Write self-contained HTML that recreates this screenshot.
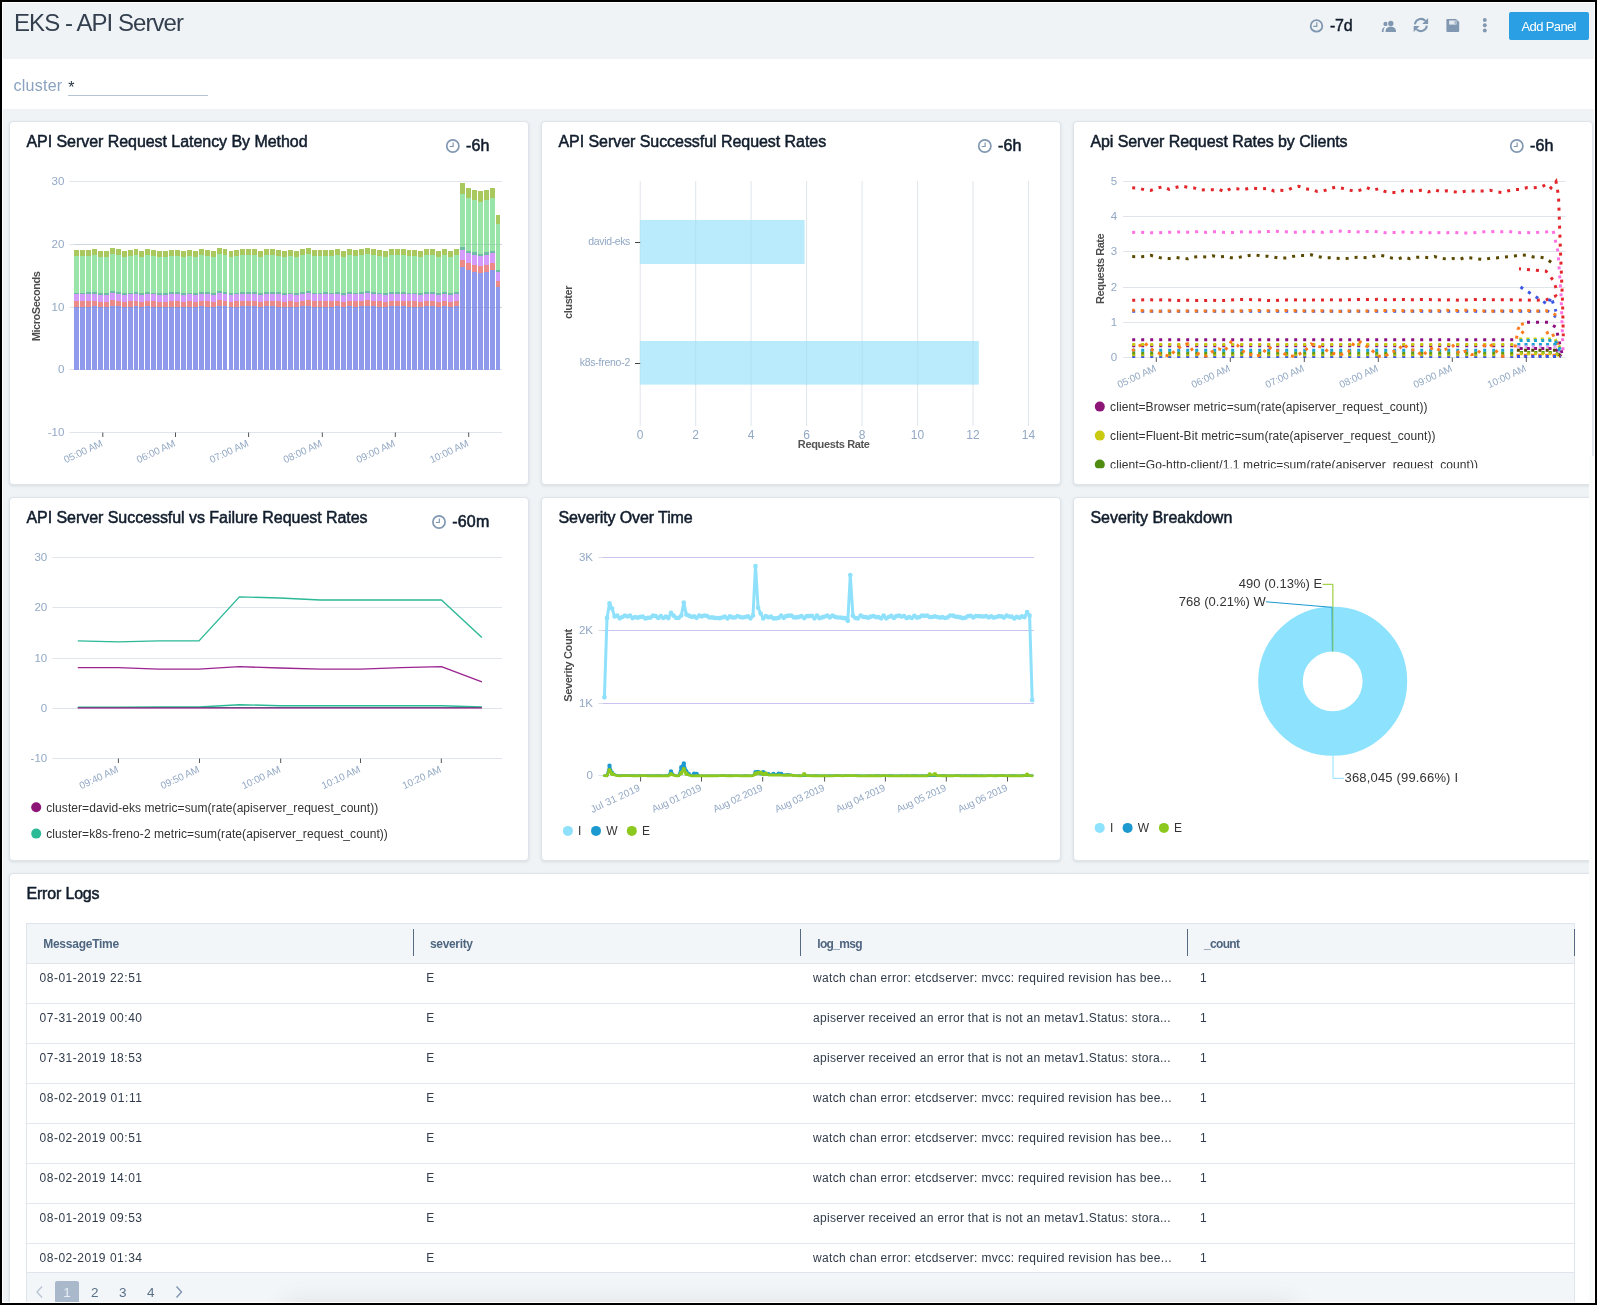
<!DOCTYPE html>
<html lang="en"><head><meta charset="utf-8"><title>EKS - API Server</title>
<style>
html,body{margin:0;padding:0;background:#000;}
body{width:1597px;height:1305px;overflow:hidden;position:relative;font-family:"Liberation Sans",sans-serif;}
#root{position:absolute;left:0;top:0;width:1597px;height:1305px;overflow:hidden;background:#000;will-change:transform;}
#pg{position:absolute;left:2px;top:2px;width:1593px;height:1301px;background:#f0f3f5;overflow:hidden;}
.abs{position:absolute;}
.t{position:absolute;white-space:nowrap;line-height:1;}
.panel{position:absolute;background:#fff;border:1px solid #dde4eb;border-radius:4px;box-sizing:border-box;box-shadow:0 1px 3px rgba(40,60,80,0.13);}
svg{position:absolute;left:0;top:0;overflow:visible;}
svg text{font-family:"Liberation Sans",sans-serif;}
</style></head>
<body>
<div id="root">
<div id="pg"></div>
<span class="t" style="left:14.00px;top:10.78px;font-size:24px;color:#333f4e;letter-spacing:-0.938px;">EKS - API Server</span>
<div class="abs" style="left:2px;top:59px;width:1592px;height:50px;background:#fff"></div>
<span class="t" style="left:13.50px;top:77.56px;font-size:16px;color:#8aa2bf;letter-spacing:0.246px;">cluster</span>
<span class="t" style="left:68.30px;top:79.86px;font-size:16px;color:#2a3645;">*</span>
<div class="abs" style="left:68px;top:95px;width:140px;height:1px;background:#b5c3d3"></div>
<svg width="1597" height="60"><g fill="none" stroke="#8097b1" stroke-width="1.8"><circle cx="1316.5" cy="25.9" r="5.8"/><path d="M1316.8 22.299999999999997V26.4H1313.3" stroke-width="1.2"/></g><g fill="#8097b1"><circle cx="1385.6" cy="23.9" r="2.2"/><path d="M1381.8 31.9c0-3 1.2-4.3 3.2-4.8c-0.9 1.1-1.4 2.7-1.4 4.8z"/><circle cx="1390.8" cy="23.5" r="3.5" fill="#f0f3f5"/><circle cx="1390.8" cy="23.5" r="2.65"/><path d="M1385.5 31.9c0-3.7 2.2-5.1 5.3-5.1s5.2 1.4 5.2 5.1z"/></g><g fill="none" stroke="#8097b1" stroke-width="2.1"><path d="M1415 24.4a6 6 0 0 1 10.4-3.5"/><path d="M1426.8 25.6a6 6 0 0 1 -10.4 3.5"/></g><g fill="#8097b1"><path d="M1428.1 18.1v5.9h-5.9z"/><path d="M1413.7 31.9v-5.9h5.9z"/></g><path fill="#8097b1" d="M1447.3 18.9h8.7l3.2 3.2v8.9a0.9 0.9 0 0 1 -0.9 0.9h-11a0.9 0.9 0 0 1 -0.9 -0.9v-11.2a0.9 0.9 0 0 1 0.9 -0.9z"/><rect x="1449.1" y="20.5" width="7.4" height="4.1" fill="#e3e9ef"/><rect x="1454.6" y="21" width="1.2" height="3.1" fill="#8097b1" fill-opacity="0.7"/><circle cx="1484.8" cy="20" r="1.95" fill="#8097b1"/><circle cx="1484.8" cy="25.3" r="1.95" fill="#8097b1"/><circle cx="1484.8" cy="30.5" r="1.95" fill="#8097b1"/></svg>
<span class="t" style="left:1330.00px;top:17.56px;font-size:16px;color:#111d2c;letter-spacing:-0.211px;-webkit-text-stroke:0.45px #111d2c;">-7d</span>
<div class="abs" style="left:1508.5px;top:12px;width:80px;height:28px;background:#2a9fe4;border-radius:2px"></div>
<span class="t" style="left:1521.50px;top:20.30px;font-size:13px;color:#fff;letter-spacing:-0.624px;">Add Panel</span>
<div class="panel" style="left:9px;top:121px;width:520px;height:364px"></div>
<span class="t" style="left:26.40px;top:134.36px;font-size:16px;color:#111d2c;letter-spacing:-0.046px;-webkit-text-stroke:0.5px #111d2c;">API Server Request Latency By Method</span>
<svg width="1597" height="1305"><g fill="none" stroke="#8097b1" stroke-width="1.7"><circle cx="452.8" cy="146" r="6.1"/><path d="M453.1 142.4V146.5H449.6" stroke-width="1.2"/></g></svg>
<span class="t" style="left:466.00px;top:138.16px;font-size:16px;color:#111d2c;letter-spacing:0.089px;-webkit-text-stroke:0.55px #111d2c;">-6h</span>
<div class="panel" style="left:541px;top:121px;width:520px;height:364px"></div>
<span class="t" style="left:558.40px;top:134.36px;font-size:16px;color:#111d2c;letter-spacing:-0.048px;-webkit-text-stroke:0.5px #111d2c;">API Server Successful Request Rates</span>
<svg width="1597" height="1305"><g fill="none" stroke="#8097b1" stroke-width="1.7"><circle cx="984.8" cy="146" r="6.1"/><path d="M985.0999999999999 142.4V146.5H981.5999999999999" stroke-width="1.2"/></g></svg>
<span class="t" style="left:998.00px;top:138.16px;font-size:16px;color:#111d2c;letter-spacing:0.089px;-webkit-text-stroke:0.55px #111d2c;">-6h</span>
<div class="panel" style="left:1073px;top:121px;width:520px;height:364px"></div>
<span class="t" style="left:1090.40px;top:134.36px;font-size:16px;color:#111d2c;letter-spacing:-0.072px;-webkit-text-stroke:0.5px #111d2c;">Api Server Request Rates by Clients</span>
<svg width="1597" height="1305"><g fill="none" stroke="#8097b1" stroke-width="1.7"><circle cx="1516.8" cy="146" r="6.1"/><path d="M1517.1 142.4V146.5H1513.6" stroke-width="1.2"/></g></svg>
<span class="t" style="left:1530.00px;top:138.16px;font-size:16px;color:#111d2c;letter-spacing:0.089px;-webkit-text-stroke:0.55px #111d2c;">-6h</span>
<div class="panel" style="left:9px;top:497px;width:520px;height:364px"></div>
<span class="t" style="left:26.40px;top:510.36px;font-size:16px;color:#111d2c;letter-spacing:-0.045px;-webkit-text-stroke:0.5px #111d2c;">API Server Successful vs Failure Request Rates</span>
<svg width="1597" height="1305"><g fill="none" stroke="#8097b1" stroke-width="1.7"><circle cx="439" cy="522" r="6.1"/><path d="M439.3 518.4V522.5H435.8" stroke-width="1.2"/></g></svg>
<span class="t" style="left:452.20px;top:514.16px;font-size:16px;color:#111d2c;letter-spacing:0.217px;-webkit-text-stroke:0.55px #111d2c;">-60m</span>
<div class="panel" style="left:541px;top:497px;width:520px;height:364px"></div>
<span class="t" style="left:558.40px;top:510.36px;font-size:16px;color:#111d2c;letter-spacing:-0.101px;-webkit-text-stroke:0.5px #111d2c;">Severity Over Time</span>
<div class="panel" style="left:1073px;top:497px;width:520px;height:364px"></div>
<span class="t" style="left:1090.40px;top:510.36px;font-size:16px;color:#111d2c;letter-spacing:-0.022px;-webkit-text-stroke:0.5px #111d2c;">Severity Breakdown</span>
<div class="panel" style="left:9px;top:873px;width:1584px;height:440px"></div>
<span class="t" style="left:26.40px;top:886.36px;font-size:16px;color:#111d2c;letter-spacing:-0.166px;-webkit-text-stroke:0.5px #111d2c;">Error Logs</span>
<svg width="1597" height="1305">
<path d="M69.5 181.5H502" stroke="#dfe5eb" stroke-width="1"/>
<text x="64.30" y="184.80" font-size="11.5" fill="#92a8c4" text-anchor="end">30</text>
<path d="M69.5 244.5H502" stroke="#dfe5eb" stroke-width="1"/>
<text x="64.30" y="247.80" font-size="11.5" fill="#92a8c4" text-anchor="end">20</text>
<path d="M69.5 307.5H502" stroke="#dfe5eb" stroke-width="1"/>
<text x="64.30" y="310.80" font-size="11.5" fill="#92a8c4" text-anchor="end">10</text>
<path d="M69.5 369.5H502" stroke="#dfe5eb" stroke-width="1"/>
<text x="64.30" y="372.80" font-size="11.5" fill="#92a8c4" text-anchor="end">0</text>
<path d="M69.5 432.5H502" stroke="#dfe5eb" stroke-width="1"/>
<text x="64.30" y="435.80" font-size="11.5" fill="#92a8c4" text-anchor="end">-10</text>
<g shape-rendering="crispEdges">
<rect x="74.20" y="307.00" width="4.9" height="62.75" fill="#8f9aec"/>
<rect x="74.20" y="301.35" width="4.9" height="5.65" fill="#ec8a8a"/>
<rect x="74.20" y="294.45" width="4.9" height="6.90" fill="#d39bfb"/>
<rect x="74.20" y="292.57" width="4.9" height="1.88" fill="#6fbba6"/>
<rect x="74.20" y="256.17" width="4.9" height="36.40" fill="#99e4a8"/>
<rect x="74.20" y="250.40" width="4.9" height="5.77" fill="#a9c95e"/>
<rect x="80.14" y="307.00" width="4.9" height="62.75" fill="#8f9aec"/>
<rect x="80.14" y="301.35" width="4.9" height="5.65" fill="#ec8a8a"/>
<rect x="80.14" y="294.45" width="4.9" height="6.90" fill="#d39bfb"/>
<rect x="80.14" y="292.57" width="4.9" height="1.88" fill="#6fbba6"/>
<rect x="80.14" y="256.17" width="4.9" height="36.40" fill="#99e4a8"/>
<rect x="80.14" y="250.40" width="4.9" height="5.77" fill="#a9c95e"/>
<rect x="86.07" y="306.81" width="4.9" height="62.94" fill="#8f9aec"/>
<rect x="86.07" y="301.16" width="4.9" height="5.65" fill="#ec8a8a"/>
<rect x="86.07" y="294.26" width="4.9" height="6.90" fill="#d39bfb"/>
<rect x="86.07" y="292.38" width="4.9" height="1.88" fill="#6fbba6"/>
<rect x="86.07" y="255.86" width="4.9" height="36.52" fill="#99e4a8"/>
<rect x="86.07" y="250.09" width="4.9" height="5.77" fill="#a9c95e"/>
<rect x="92.00" y="306.25" width="4.9" height="63.50" fill="#8f9aec"/>
<rect x="92.00" y="300.60" width="4.9" height="5.65" fill="#ec8a8a"/>
<rect x="92.00" y="293.70" width="4.9" height="6.90" fill="#d39bfb"/>
<rect x="92.00" y="291.81" width="4.9" height="1.88" fill="#6fbba6"/>
<rect x="92.00" y="254.92" width="4.9" height="36.90" fill="#99e4a8"/>
<rect x="92.00" y="249.14" width="4.9" height="5.77" fill="#a9c95e"/>
<rect x="97.94" y="307.38" width="4.9" height="62.37" fill="#8f9aec"/>
<rect x="97.94" y="301.73" width="4.9" height="5.65" fill="#ec8a8a"/>
<rect x="97.94" y="294.83" width="4.9" height="6.90" fill="#d39bfb"/>
<rect x="97.94" y="292.94" width="4.9" height="1.88" fill="#6fbba6"/>
<rect x="97.94" y="256.80" width="4.9" height="36.14" fill="#99e4a8"/>
<rect x="97.94" y="251.03" width="4.9" height="5.77" fill="#a9c95e"/>
<rect x="103.88" y="307.38" width="4.9" height="62.37" fill="#8f9aec"/>
<rect x="103.88" y="301.73" width="4.9" height="5.65" fill="#ec8a8a"/>
<rect x="103.88" y="294.83" width="4.9" height="6.90" fill="#d39bfb"/>
<rect x="103.88" y="292.94" width="4.9" height="1.88" fill="#6fbba6"/>
<rect x="103.88" y="256.80" width="4.9" height="36.14" fill="#99e4a8"/>
<rect x="103.88" y="251.03" width="4.9" height="5.77" fill="#a9c95e"/>
<rect x="109.81" y="305.68" width="4.9" height="64.07" fill="#8f9aec"/>
<rect x="109.81" y="300.03" width="4.9" height="5.65" fill="#ec8a8a"/>
<rect x="109.81" y="293.13" width="4.9" height="6.90" fill="#d39bfb"/>
<rect x="109.81" y="291.25" width="4.9" height="1.88" fill="#6fbba6"/>
<rect x="109.81" y="253.98" width="4.9" height="37.27" fill="#99e4a8"/>
<rect x="109.81" y="248.20" width="4.9" height="5.77" fill="#a9c95e"/>
<rect x="115.75" y="306.25" width="4.9" height="63.50" fill="#8f9aec"/>
<rect x="115.75" y="300.60" width="4.9" height="5.65" fill="#ec8a8a"/>
<rect x="115.75" y="293.70" width="4.9" height="6.90" fill="#d39bfb"/>
<rect x="115.75" y="291.81" width="4.9" height="1.88" fill="#6fbba6"/>
<rect x="115.75" y="254.92" width="4.9" height="36.90" fill="#99e4a8"/>
<rect x="115.75" y="249.14" width="4.9" height="5.77" fill="#a9c95e"/>
<rect x="121.68" y="307.38" width="4.9" height="62.37" fill="#8f9aec"/>
<rect x="121.68" y="301.73" width="4.9" height="5.65" fill="#ec8a8a"/>
<rect x="121.68" y="294.83" width="4.9" height="6.90" fill="#d39bfb"/>
<rect x="121.68" y="292.94" width="4.9" height="1.88" fill="#6fbba6"/>
<rect x="121.68" y="256.80" width="4.9" height="36.14" fill="#99e4a8"/>
<rect x="121.68" y="251.03" width="4.9" height="5.77" fill="#a9c95e"/>
<rect x="127.62" y="307.00" width="4.9" height="62.75" fill="#8f9aec"/>
<rect x="127.62" y="301.35" width="4.9" height="5.65" fill="#ec8a8a"/>
<rect x="127.62" y="294.45" width="4.9" height="6.90" fill="#d39bfb"/>
<rect x="127.62" y="292.57" width="4.9" height="1.88" fill="#6fbba6"/>
<rect x="127.62" y="256.17" width="4.9" height="36.40" fill="#99e4a8"/>
<rect x="127.62" y="250.40" width="4.9" height="5.77" fill="#a9c95e"/>
<rect x="133.55" y="306.25" width="4.9" height="63.50" fill="#8f9aec"/>
<rect x="133.55" y="300.60" width="4.9" height="5.65" fill="#ec8a8a"/>
<rect x="133.55" y="293.70" width="4.9" height="6.90" fill="#d39bfb"/>
<rect x="133.55" y="291.81" width="4.9" height="1.88" fill="#6fbba6"/>
<rect x="133.55" y="254.92" width="4.9" height="36.90" fill="#99e4a8"/>
<rect x="133.55" y="249.14" width="4.9" height="5.77" fill="#a9c95e"/>
<rect x="139.49" y="307.38" width="4.9" height="62.37" fill="#8f9aec"/>
<rect x="139.49" y="301.73" width="4.9" height="5.65" fill="#ec8a8a"/>
<rect x="139.49" y="294.83" width="4.9" height="6.90" fill="#d39bfb"/>
<rect x="139.49" y="292.94" width="4.9" height="1.88" fill="#6fbba6"/>
<rect x="139.49" y="256.80" width="4.9" height="36.14" fill="#99e4a8"/>
<rect x="139.49" y="251.03" width="4.9" height="5.77" fill="#a9c95e"/>
<rect x="145.42" y="306.25" width="4.9" height="63.50" fill="#8f9aec"/>
<rect x="145.42" y="300.60" width="4.9" height="5.65" fill="#ec8a8a"/>
<rect x="145.42" y="293.70" width="4.9" height="6.90" fill="#d39bfb"/>
<rect x="145.42" y="291.81" width="4.9" height="1.88" fill="#6fbba6"/>
<rect x="145.42" y="254.92" width="4.9" height="36.90" fill="#99e4a8"/>
<rect x="145.42" y="249.14" width="4.9" height="5.77" fill="#a9c95e"/>
<rect x="151.36" y="307.00" width="4.9" height="62.75" fill="#8f9aec"/>
<rect x="151.36" y="301.35" width="4.9" height="5.65" fill="#ec8a8a"/>
<rect x="151.36" y="294.45" width="4.9" height="6.90" fill="#d39bfb"/>
<rect x="151.36" y="292.57" width="4.9" height="1.88" fill="#6fbba6"/>
<rect x="151.36" y="256.17" width="4.9" height="36.40" fill="#99e4a8"/>
<rect x="151.36" y="250.40" width="4.9" height="5.77" fill="#a9c95e"/>
<rect x="157.29" y="307.38" width="4.9" height="62.37" fill="#8f9aec"/>
<rect x="157.29" y="301.73" width="4.9" height="5.65" fill="#ec8a8a"/>
<rect x="157.29" y="294.83" width="4.9" height="6.90" fill="#d39bfb"/>
<rect x="157.29" y="292.94" width="4.9" height="1.88" fill="#6fbba6"/>
<rect x="157.29" y="256.80" width="4.9" height="36.14" fill="#99e4a8"/>
<rect x="157.29" y="251.03" width="4.9" height="5.77" fill="#a9c95e"/>
<rect x="163.22" y="307.38" width="4.9" height="62.37" fill="#8f9aec"/>
<rect x="163.22" y="301.73" width="4.9" height="5.65" fill="#ec8a8a"/>
<rect x="163.22" y="294.83" width="4.9" height="6.90" fill="#d39bfb"/>
<rect x="163.22" y="292.94" width="4.9" height="1.88" fill="#6fbba6"/>
<rect x="163.22" y="256.80" width="4.9" height="36.14" fill="#99e4a8"/>
<rect x="163.22" y="251.03" width="4.9" height="5.77" fill="#a9c95e"/>
<rect x="169.16" y="306.81" width="4.9" height="62.94" fill="#8f9aec"/>
<rect x="169.16" y="301.16" width="4.9" height="5.65" fill="#ec8a8a"/>
<rect x="169.16" y="294.26" width="4.9" height="6.90" fill="#d39bfb"/>
<rect x="169.16" y="292.38" width="4.9" height="1.88" fill="#6fbba6"/>
<rect x="169.16" y="255.86" width="4.9" height="36.52" fill="#99e4a8"/>
<rect x="169.16" y="250.09" width="4.9" height="5.77" fill="#a9c95e"/>
<rect x="175.09" y="306.81" width="4.9" height="62.94" fill="#8f9aec"/>
<rect x="175.09" y="301.16" width="4.9" height="5.65" fill="#ec8a8a"/>
<rect x="175.09" y="294.26" width="4.9" height="6.90" fill="#d39bfb"/>
<rect x="175.09" y="292.38" width="4.9" height="1.88" fill="#6fbba6"/>
<rect x="175.09" y="255.86" width="4.9" height="36.52" fill="#99e4a8"/>
<rect x="175.09" y="250.09" width="4.9" height="5.77" fill="#a9c95e"/>
<rect x="181.03" y="307.38" width="4.9" height="62.37" fill="#8f9aec"/>
<rect x="181.03" y="301.73" width="4.9" height="5.65" fill="#ec8a8a"/>
<rect x="181.03" y="294.83" width="4.9" height="6.90" fill="#d39bfb"/>
<rect x="181.03" y="292.94" width="4.9" height="1.88" fill="#6fbba6"/>
<rect x="181.03" y="256.80" width="4.9" height="36.14" fill="#99e4a8"/>
<rect x="181.03" y="251.03" width="4.9" height="5.77" fill="#a9c95e"/>
<rect x="186.96" y="307.00" width="4.9" height="62.75" fill="#8f9aec"/>
<rect x="186.96" y="301.35" width="4.9" height="5.65" fill="#ec8a8a"/>
<rect x="186.96" y="294.45" width="4.9" height="6.90" fill="#d39bfb"/>
<rect x="186.96" y="292.57" width="4.9" height="1.88" fill="#6fbba6"/>
<rect x="186.96" y="256.17" width="4.9" height="36.40" fill="#99e4a8"/>
<rect x="186.96" y="250.40" width="4.9" height="5.77" fill="#a9c95e"/>
<rect x="192.90" y="307.38" width="4.9" height="62.37" fill="#8f9aec"/>
<rect x="192.90" y="301.73" width="4.9" height="5.65" fill="#ec8a8a"/>
<rect x="192.90" y="294.83" width="4.9" height="6.90" fill="#d39bfb"/>
<rect x="192.90" y="292.94" width="4.9" height="1.88" fill="#6fbba6"/>
<rect x="192.90" y="256.80" width="4.9" height="36.14" fill="#99e4a8"/>
<rect x="192.90" y="251.03" width="4.9" height="5.77" fill="#a9c95e"/>
<rect x="198.83" y="306.25" width="4.9" height="63.50" fill="#8f9aec"/>
<rect x="198.83" y="300.60" width="4.9" height="5.65" fill="#ec8a8a"/>
<rect x="198.83" y="293.70" width="4.9" height="6.90" fill="#d39bfb"/>
<rect x="198.83" y="291.81" width="4.9" height="1.88" fill="#6fbba6"/>
<rect x="198.83" y="254.92" width="4.9" height="36.90" fill="#99e4a8"/>
<rect x="198.83" y="249.14" width="4.9" height="5.77" fill="#a9c95e"/>
<rect x="204.77" y="306.81" width="4.9" height="62.94" fill="#8f9aec"/>
<rect x="204.77" y="301.16" width="4.9" height="5.65" fill="#ec8a8a"/>
<rect x="204.77" y="294.26" width="4.9" height="6.90" fill="#d39bfb"/>
<rect x="204.77" y="292.38" width="4.9" height="1.88" fill="#6fbba6"/>
<rect x="204.77" y="255.86" width="4.9" height="36.52" fill="#99e4a8"/>
<rect x="204.77" y="250.09" width="4.9" height="5.77" fill="#a9c95e"/>
<rect x="210.70" y="307.38" width="4.9" height="62.37" fill="#8f9aec"/>
<rect x="210.70" y="301.73" width="4.9" height="5.65" fill="#ec8a8a"/>
<rect x="210.70" y="294.83" width="4.9" height="6.90" fill="#d39bfb"/>
<rect x="210.70" y="292.94" width="4.9" height="1.88" fill="#6fbba6"/>
<rect x="210.70" y="256.80" width="4.9" height="36.14" fill="#99e4a8"/>
<rect x="210.70" y="251.03" width="4.9" height="5.77" fill="#a9c95e"/>
<rect x="216.64" y="305.68" width="4.9" height="64.07" fill="#8f9aec"/>
<rect x="216.64" y="300.03" width="4.9" height="5.65" fill="#ec8a8a"/>
<rect x="216.64" y="293.13" width="4.9" height="6.90" fill="#d39bfb"/>
<rect x="216.64" y="291.25" width="4.9" height="1.88" fill="#6fbba6"/>
<rect x="216.64" y="253.98" width="4.9" height="37.27" fill="#99e4a8"/>
<rect x="216.64" y="248.20" width="4.9" height="5.77" fill="#a9c95e"/>
<rect x="222.57" y="306.25" width="4.9" height="63.50" fill="#8f9aec"/>
<rect x="222.57" y="300.60" width="4.9" height="5.65" fill="#ec8a8a"/>
<rect x="222.57" y="293.70" width="4.9" height="6.90" fill="#d39bfb"/>
<rect x="222.57" y="291.81" width="4.9" height="1.88" fill="#6fbba6"/>
<rect x="222.57" y="254.92" width="4.9" height="36.90" fill="#99e4a8"/>
<rect x="222.57" y="249.14" width="4.9" height="5.77" fill="#a9c95e"/>
<rect x="228.51" y="307.38" width="4.9" height="62.37" fill="#8f9aec"/>
<rect x="228.51" y="301.73" width="4.9" height="5.65" fill="#ec8a8a"/>
<rect x="228.51" y="294.83" width="4.9" height="6.90" fill="#d39bfb"/>
<rect x="228.51" y="292.94" width="4.9" height="1.88" fill="#6fbba6"/>
<rect x="228.51" y="256.80" width="4.9" height="36.14" fill="#99e4a8"/>
<rect x="228.51" y="251.03" width="4.9" height="5.77" fill="#a9c95e"/>
<rect x="234.44" y="307.00" width="4.9" height="62.75" fill="#8f9aec"/>
<rect x="234.44" y="301.35" width="4.9" height="5.65" fill="#ec8a8a"/>
<rect x="234.44" y="294.45" width="4.9" height="6.90" fill="#d39bfb"/>
<rect x="234.44" y="292.57" width="4.9" height="1.88" fill="#6fbba6"/>
<rect x="234.44" y="256.17" width="4.9" height="36.40" fill="#99e4a8"/>
<rect x="234.44" y="250.40" width="4.9" height="5.77" fill="#a9c95e"/>
<rect x="240.38" y="306.25" width="4.9" height="63.50" fill="#8f9aec"/>
<rect x="240.38" y="300.60" width="4.9" height="5.65" fill="#ec8a8a"/>
<rect x="240.38" y="293.70" width="4.9" height="6.90" fill="#d39bfb"/>
<rect x="240.38" y="291.81" width="4.9" height="1.88" fill="#6fbba6"/>
<rect x="240.38" y="254.92" width="4.9" height="36.90" fill="#99e4a8"/>
<rect x="240.38" y="249.14" width="4.9" height="5.77" fill="#a9c95e"/>
<rect x="246.31" y="306.25" width="4.9" height="63.50" fill="#8f9aec"/>
<rect x="246.31" y="300.60" width="4.9" height="5.65" fill="#ec8a8a"/>
<rect x="246.31" y="293.70" width="4.9" height="6.90" fill="#d39bfb"/>
<rect x="246.31" y="291.81" width="4.9" height="1.88" fill="#6fbba6"/>
<rect x="246.31" y="254.92" width="4.9" height="36.90" fill="#99e4a8"/>
<rect x="246.31" y="249.14" width="4.9" height="5.77" fill="#a9c95e"/>
<rect x="252.25" y="306.25" width="4.9" height="63.50" fill="#8f9aec"/>
<rect x="252.25" y="300.60" width="4.9" height="5.65" fill="#ec8a8a"/>
<rect x="252.25" y="293.70" width="4.9" height="6.90" fill="#d39bfb"/>
<rect x="252.25" y="291.81" width="4.9" height="1.88" fill="#6fbba6"/>
<rect x="252.25" y="254.92" width="4.9" height="36.90" fill="#99e4a8"/>
<rect x="252.25" y="249.14" width="4.9" height="5.77" fill="#a9c95e"/>
<rect x="258.19" y="307.38" width="4.9" height="62.37" fill="#8f9aec"/>
<rect x="258.19" y="301.73" width="4.9" height="5.65" fill="#ec8a8a"/>
<rect x="258.19" y="294.83" width="4.9" height="6.90" fill="#d39bfb"/>
<rect x="258.19" y="292.94" width="4.9" height="1.88" fill="#6fbba6"/>
<rect x="258.19" y="256.80" width="4.9" height="36.14" fill="#99e4a8"/>
<rect x="258.19" y="251.03" width="4.9" height="5.77" fill="#a9c95e"/>
<rect x="264.12" y="306.25" width="4.9" height="63.50" fill="#8f9aec"/>
<rect x="264.12" y="300.60" width="4.9" height="5.65" fill="#ec8a8a"/>
<rect x="264.12" y="293.70" width="4.9" height="6.90" fill="#d39bfb"/>
<rect x="264.12" y="291.81" width="4.9" height="1.88" fill="#6fbba6"/>
<rect x="264.12" y="254.92" width="4.9" height="36.90" fill="#99e4a8"/>
<rect x="264.12" y="249.14" width="4.9" height="5.77" fill="#a9c95e"/>
<rect x="270.06" y="306.25" width="4.9" height="63.50" fill="#8f9aec"/>
<rect x="270.06" y="300.60" width="4.9" height="5.65" fill="#ec8a8a"/>
<rect x="270.06" y="293.70" width="4.9" height="6.90" fill="#d39bfb"/>
<rect x="270.06" y="291.81" width="4.9" height="1.88" fill="#6fbba6"/>
<rect x="270.06" y="254.92" width="4.9" height="36.90" fill="#99e4a8"/>
<rect x="270.06" y="249.14" width="4.9" height="5.77" fill="#a9c95e"/>
<rect x="275.99" y="306.81" width="4.9" height="62.94" fill="#8f9aec"/>
<rect x="275.99" y="301.16" width="4.9" height="5.65" fill="#ec8a8a"/>
<rect x="275.99" y="294.26" width="4.9" height="6.90" fill="#d39bfb"/>
<rect x="275.99" y="292.38" width="4.9" height="1.88" fill="#6fbba6"/>
<rect x="275.99" y="255.86" width="4.9" height="36.52" fill="#99e4a8"/>
<rect x="275.99" y="250.09" width="4.9" height="5.77" fill="#a9c95e"/>
<rect x="281.93" y="307.38" width="4.9" height="62.37" fill="#8f9aec"/>
<rect x="281.93" y="301.73" width="4.9" height="5.65" fill="#ec8a8a"/>
<rect x="281.93" y="294.83" width="4.9" height="6.90" fill="#d39bfb"/>
<rect x="281.93" y="292.94" width="4.9" height="1.88" fill="#6fbba6"/>
<rect x="281.93" y="256.80" width="4.9" height="36.14" fill="#99e4a8"/>
<rect x="281.93" y="251.03" width="4.9" height="5.77" fill="#a9c95e"/>
<rect x="287.86" y="307.00" width="4.9" height="62.75" fill="#8f9aec"/>
<rect x="287.86" y="301.35" width="4.9" height="5.65" fill="#ec8a8a"/>
<rect x="287.86" y="294.45" width="4.9" height="6.90" fill="#d39bfb"/>
<rect x="287.86" y="292.57" width="4.9" height="1.88" fill="#6fbba6"/>
<rect x="287.86" y="256.17" width="4.9" height="36.40" fill="#99e4a8"/>
<rect x="287.86" y="250.40" width="4.9" height="5.77" fill="#a9c95e"/>
<rect x="293.80" y="307.38" width="4.9" height="62.37" fill="#8f9aec"/>
<rect x="293.80" y="301.73" width="4.9" height="5.65" fill="#ec8a8a"/>
<rect x="293.80" y="294.83" width="4.9" height="6.90" fill="#d39bfb"/>
<rect x="293.80" y="292.94" width="4.9" height="1.88" fill="#6fbba6"/>
<rect x="293.80" y="256.80" width="4.9" height="36.14" fill="#99e4a8"/>
<rect x="293.80" y="251.03" width="4.9" height="5.77" fill="#a9c95e"/>
<rect x="299.73" y="306.25" width="4.9" height="63.50" fill="#8f9aec"/>
<rect x="299.73" y="300.60" width="4.9" height="5.65" fill="#ec8a8a"/>
<rect x="299.73" y="293.70" width="4.9" height="6.90" fill="#d39bfb"/>
<rect x="299.73" y="291.81" width="4.9" height="1.88" fill="#6fbba6"/>
<rect x="299.73" y="254.92" width="4.9" height="36.90" fill="#99e4a8"/>
<rect x="299.73" y="249.14" width="4.9" height="5.77" fill="#a9c95e"/>
<rect x="305.66" y="305.68" width="4.9" height="64.07" fill="#8f9aec"/>
<rect x="305.66" y="300.03" width="4.9" height="5.65" fill="#ec8a8a"/>
<rect x="305.66" y="293.13" width="4.9" height="6.90" fill="#d39bfb"/>
<rect x="305.66" y="291.25" width="4.9" height="1.88" fill="#6fbba6"/>
<rect x="305.66" y="253.98" width="4.9" height="37.27" fill="#99e4a8"/>
<rect x="305.66" y="248.20" width="4.9" height="5.77" fill="#a9c95e"/>
<rect x="311.60" y="307.00" width="4.9" height="62.75" fill="#8f9aec"/>
<rect x="311.60" y="301.35" width="4.9" height="5.65" fill="#ec8a8a"/>
<rect x="311.60" y="294.45" width="4.9" height="6.90" fill="#d39bfb"/>
<rect x="311.60" y="292.57" width="4.9" height="1.88" fill="#6fbba6"/>
<rect x="311.60" y="256.17" width="4.9" height="36.40" fill="#99e4a8"/>
<rect x="311.60" y="250.40" width="4.9" height="5.77" fill="#a9c95e"/>
<rect x="317.53" y="307.00" width="4.9" height="62.75" fill="#8f9aec"/>
<rect x="317.53" y="301.35" width="4.9" height="5.65" fill="#ec8a8a"/>
<rect x="317.53" y="294.45" width="4.9" height="6.90" fill="#d39bfb"/>
<rect x="317.53" y="292.57" width="4.9" height="1.88" fill="#6fbba6"/>
<rect x="317.53" y="256.17" width="4.9" height="36.40" fill="#99e4a8"/>
<rect x="317.53" y="250.40" width="4.9" height="5.77" fill="#a9c95e"/>
<rect x="323.47" y="306.81" width="4.9" height="62.94" fill="#8f9aec"/>
<rect x="323.47" y="301.16" width="4.9" height="5.65" fill="#ec8a8a"/>
<rect x="323.47" y="294.26" width="4.9" height="6.90" fill="#d39bfb"/>
<rect x="323.47" y="292.38" width="4.9" height="1.88" fill="#6fbba6"/>
<rect x="323.47" y="255.86" width="4.9" height="36.52" fill="#99e4a8"/>
<rect x="323.47" y="250.09" width="4.9" height="5.77" fill="#a9c95e"/>
<rect x="329.40" y="307.00" width="4.9" height="62.75" fill="#8f9aec"/>
<rect x="329.40" y="301.35" width="4.9" height="5.65" fill="#ec8a8a"/>
<rect x="329.40" y="294.45" width="4.9" height="6.90" fill="#d39bfb"/>
<rect x="329.40" y="292.57" width="4.9" height="1.88" fill="#6fbba6"/>
<rect x="329.40" y="256.17" width="4.9" height="36.40" fill="#99e4a8"/>
<rect x="329.40" y="250.40" width="4.9" height="5.77" fill="#a9c95e"/>
<rect x="335.34" y="306.25" width="4.9" height="63.50" fill="#8f9aec"/>
<rect x="335.34" y="300.60" width="4.9" height="5.65" fill="#ec8a8a"/>
<rect x="335.34" y="293.70" width="4.9" height="6.90" fill="#d39bfb"/>
<rect x="335.34" y="291.81" width="4.9" height="1.88" fill="#6fbba6"/>
<rect x="335.34" y="254.92" width="4.9" height="36.90" fill="#99e4a8"/>
<rect x="335.34" y="249.14" width="4.9" height="5.77" fill="#a9c95e"/>
<rect x="341.27" y="307.38" width="4.9" height="62.37" fill="#8f9aec"/>
<rect x="341.27" y="301.73" width="4.9" height="5.65" fill="#ec8a8a"/>
<rect x="341.27" y="294.83" width="4.9" height="6.90" fill="#d39bfb"/>
<rect x="341.27" y="292.94" width="4.9" height="1.88" fill="#6fbba6"/>
<rect x="341.27" y="256.80" width="4.9" height="36.14" fill="#99e4a8"/>
<rect x="341.27" y="251.03" width="4.9" height="5.77" fill="#a9c95e"/>
<rect x="347.21" y="306.25" width="4.9" height="63.50" fill="#8f9aec"/>
<rect x="347.21" y="300.60" width="4.9" height="5.65" fill="#ec8a8a"/>
<rect x="347.21" y="293.70" width="4.9" height="6.90" fill="#d39bfb"/>
<rect x="347.21" y="291.81" width="4.9" height="1.88" fill="#6fbba6"/>
<rect x="347.21" y="254.92" width="4.9" height="36.90" fill="#99e4a8"/>
<rect x="347.21" y="249.14" width="4.9" height="5.77" fill="#a9c95e"/>
<rect x="353.14" y="307.00" width="4.9" height="62.75" fill="#8f9aec"/>
<rect x="353.14" y="301.35" width="4.9" height="5.65" fill="#ec8a8a"/>
<rect x="353.14" y="294.45" width="4.9" height="6.90" fill="#d39bfb"/>
<rect x="353.14" y="292.57" width="4.9" height="1.88" fill="#6fbba6"/>
<rect x="353.14" y="256.17" width="4.9" height="36.40" fill="#99e4a8"/>
<rect x="353.14" y="250.40" width="4.9" height="5.77" fill="#a9c95e"/>
<rect x="359.08" y="306.25" width="4.9" height="63.50" fill="#8f9aec"/>
<rect x="359.08" y="300.60" width="4.9" height="5.65" fill="#ec8a8a"/>
<rect x="359.08" y="293.70" width="4.9" height="6.90" fill="#d39bfb"/>
<rect x="359.08" y="291.81" width="4.9" height="1.88" fill="#6fbba6"/>
<rect x="359.08" y="254.92" width="4.9" height="36.90" fill="#99e4a8"/>
<rect x="359.08" y="249.14" width="4.9" height="5.77" fill="#a9c95e"/>
<rect x="365.01" y="305.68" width="4.9" height="64.07" fill="#8f9aec"/>
<rect x="365.01" y="300.03" width="4.9" height="5.65" fill="#ec8a8a"/>
<rect x="365.01" y="293.13" width="4.9" height="6.90" fill="#d39bfb"/>
<rect x="365.01" y="291.25" width="4.9" height="1.88" fill="#6fbba6"/>
<rect x="365.01" y="253.98" width="4.9" height="37.27" fill="#99e4a8"/>
<rect x="365.01" y="248.20" width="4.9" height="5.77" fill="#a9c95e"/>
<rect x="370.95" y="306.25" width="4.9" height="63.50" fill="#8f9aec"/>
<rect x="370.95" y="300.60" width="4.9" height="5.65" fill="#ec8a8a"/>
<rect x="370.95" y="293.70" width="4.9" height="6.90" fill="#d39bfb"/>
<rect x="370.95" y="291.81" width="4.9" height="1.88" fill="#6fbba6"/>
<rect x="370.95" y="254.92" width="4.9" height="36.90" fill="#99e4a8"/>
<rect x="370.95" y="249.14" width="4.9" height="5.77" fill="#a9c95e"/>
<rect x="376.88" y="307.00" width="4.9" height="62.75" fill="#8f9aec"/>
<rect x="376.88" y="301.35" width="4.9" height="5.65" fill="#ec8a8a"/>
<rect x="376.88" y="294.45" width="4.9" height="6.90" fill="#d39bfb"/>
<rect x="376.88" y="292.57" width="4.9" height="1.88" fill="#6fbba6"/>
<rect x="376.88" y="256.17" width="4.9" height="36.40" fill="#99e4a8"/>
<rect x="376.88" y="250.40" width="4.9" height="5.77" fill="#a9c95e"/>
<rect x="382.82" y="307.38" width="4.9" height="62.37" fill="#8f9aec"/>
<rect x="382.82" y="301.73" width="4.9" height="5.65" fill="#ec8a8a"/>
<rect x="382.82" y="294.83" width="4.9" height="6.90" fill="#d39bfb"/>
<rect x="382.82" y="292.94" width="4.9" height="1.88" fill="#6fbba6"/>
<rect x="382.82" y="256.80" width="4.9" height="36.14" fill="#99e4a8"/>
<rect x="382.82" y="251.03" width="4.9" height="5.77" fill="#a9c95e"/>
<rect x="388.75" y="306.25" width="4.9" height="63.50" fill="#8f9aec"/>
<rect x="388.75" y="300.60" width="4.9" height="5.65" fill="#ec8a8a"/>
<rect x="388.75" y="293.70" width="4.9" height="6.90" fill="#d39bfb"/>
<rect x="388.75" y="291.81" width="4.9" height="1.88" fill="#6fbba6"/>
<rect x="388.75" y="254.92" width="4.9" height="36.90" fill="#99e4a8"/>
<rect x="388.75" y="249.14" width="4.9" height="5.77" fill="#a9c95e"/>
<rect x="394.69" y="306.25" width="4.9" height="63.50" fill="#8f9aec"/>
<rect x="394.69" y="300.60" width="4.9" height="5.65" fill="#ec8a8a"/>
<rect x="394.69" y="293.70" width="4.9" height="6.90" fill="#d39bfb"/>
<rect x="394.69" y="291.81" width="4.9" height="1.88" fill="#6fbba6"/>
<rect x="394.69" y="254.92" width="4.9" height="36.90" fill="#99e4a8"/>
<rect x="394.69" y="249.14" width="4.9" height="5.77" fill="#a9c95e"/>
<rect x="400.62" y="306.25" width="4.9" height="63.50" fill="#8f9aec"/>
<rect x="400.62" y="300.60" width="4.9" height="5.65" fill="#ec8a8a"/>
<rect x="400.62" y="293.70" width="4.9" height="6.90" fill="#d39bfb"/>
<rect x="400.62" y="291.81" width="4.9" height="1.88" fill="#6fbba6"/>
<rect x="400.62" y="254.92" width="4.9" height="36.90" fill="#99e4a8"/>
<rect x="400.62" y="249.14" width="4.9" height="5.77" fill="#a9c95e"/>
<rect x="406.56" y="307.00" width="4.9" height="62.75" fill="#8f9aec"/>
<rect x="406.56" y="301.35" width="4.9" height="5.65" fill="#ec8a8a"/>
<rect x="406.56" y="294.45" width="4.9" height="6.90" fill="#d39bfb"/>
<rect x="406.56" y="292.57" width="4.9" height="1.88" fill="#6fbba6"/>
<rect x="406.56" y="256.17" width="4.9" height="36.40" fill="#99e4a8"/>
<rect x="406.56" y="250.40" width="4.9" height="5.77" fill="#a9c95e"/>
<rect x="412.49" y="307.00" width="4.9" height="62.75" fill="#8f9aec"/>
<rect x="412.49" y="301.35" width="4.9" height="5.65" fill="#ec8a8a"/>
<rect x="412.49" y="294.45" width="4.9" height="6.90" fill="#d39bfb"/>
<rect x="412.49" y="292.57" width="4.9" height="1.88" fill="#6fbba6"/>
<rect x="412.49" y="256.17" width="4.9" height="36.40" fill="#99e4a8"/>
<rect x="412.49" y="250.40" width="4.9" height="5.77" fill="#a9c95e"/>
<rect x="418.43" y="307.38" width="4.9" height="62.37" fill="#8f9aec"/>
<rect x="418.43" y="301.73" width="4.9" height="5.65" fill="#ec8a8a"/>
<rect x="418.43" y="294.83" width="4.9" height="6.90" fill="#d39bfb"/>
<rect x="418.43" y="292.94" width="4.9" height="1.88" fill="#6fbba6"/>
<rect x="418.43" y="256.80" width="4.9" height="36.14" fill="#99e4a8"/>
<rect x="418.43" y="251.03" width="4.9" height="5.77" fill="#a9c95e"/>
<rect x="424.36" y="306.25" width="4.9" height="63.50" fill="#8f9aec"/>
<rect x="424.36" y="300.60" width="4.9" height="5.65" fill="#ec8a8a"/>
<rect x="424.36" y="293.70" width="4.9" height="6.90" fill="#d39bfb"/>
<rect x="424.36" y="291.81" width="4.9" height="1.88" fill="#6fbba6"/>
<rect x="424.36" y="254.92" width="4.9" height="36.90" fill="#99e4a8"/>
<rect x="424.36" y="249.14" width="4.9" height="5.77" fill="#a9c95e"/>
<rect x="430.30" y="306.25" width="4.9" height="63.50" fill="#8f9aec"/>
<rect x="430.30" y="300.60" width="4.9" height="5.65" fill="#ec8a8a"/>
<rect x="430.30" y="293.70" width="4.9" height="6.90" fill="#d39bfb"/>
<rect x="430.30" y="291.81" width="4.9" height="1.88" fill="#6fbba6"/>
<rect x="430.30" y="254.92" width="4.9" height="36.90" fill="#99e4a8"/>
<rect x="430.30" y="249.14" width="4.9" height="5.77" fill="#a9c95e"/>
<rect x="436.23" y="307.38" width="4.9" height="62.37" fill="#8f9aec"/>
<rect x="436.23" y="301.73" width="4.9" height="5.65" fill="#ec8a8a"/>
<rect x="436.23" y="294.83" width="4.9" height="6.90" fill="#d39bfb"/>
<rect x="436.23" y="292.94" width="4.9" height="1.88" fill="#6fbba6"/>
<rect x="436.23" y="256.80" width="4.9" height="36.14" fill="#99e4a8"/>
<rect x="436.23" y="251.03" width="4.9" height="5.77" fill="#a9c95e"/>
<rect x="442.17" y="306.25" width="4.9" height="63.50" fill="#8f9aec"/>
<rect x="442.17" y="300.60" width="4.9" height="5.65" fill="#ec8a8a"/>
<rect x="442.17" y="293.70" width="4.9" height="6.90" fill="#d39bfb"/>
<rect x="442.17" y="291.81" width="4.9" height="1.88" fill="#6fbba6"/>
<rect x="442.17" y="254.92" width="4.9" height="36.90" fill="#99e4a8"/>
<rect x="442.17" y="249.14" width="4.9" height="5.77" fill="#a9c95e"/>
<rect x="448.10" y="307.38" width="4.9" height="62.37" fill="#8f9aec"/>
<rect x="448.10" y="301.73" width="4.9" height="5.65" fill="#ec8a8a"/>
<rect x="448.10" y="294.83" width="4.9" height="6.90" fill="#d39bfb"/>
<rect x="448.10" y="292.94" width="4.9" height="1.88" fill="#6fbba6"/>
<rect x="448.10" y="256.80" width="4.9" height="36.14" fill="#99e4a8"/>
<rect x="448.10" y="251.03" width="4.9" height="5.77" fill="#a9c95e"/>
<rect x="454.04" y="306.25" width="4.9" height="63.50" fill="#8f9aec"/>
<rect x="454.04" y="300.60" width="4.9" height="5.65" fill="#ec8a8a"/>
<rect x="454.04" y="293.70" width="4.9" height="6.90" fill="#d39bfb"/>
<rect x="454.04" y="291.81" width="4.9" height="1.88" fill="#6fbba6"/>
<rect x="454.04" y="254.92" width="4.9" height="36.90" fill="#99e4a8"/>
<rect x="454.04" y="249.14" width="4.9" height="5.77" fill="#a9c95e"/>
<rect x="459.97" y="267.47" width="4.9" height="102.28" fill="#8f9aec"/>
<rect x="459.97" y="259.94" width="4.9" height="7.53" fill="#ec8a8a"/>
<rect x="459.97" y="249.90" width="4.9" height="10.04" fill="#d39bfb"/>
<rect x="459.97" y="247.07" width="4.9" height="2.82" fill="#6fbba6"/>
<rect x="459.97" y="194.36" width="4.9" height="52.71" fill="#99e4a8"/>
<rect x="459.97" y="183.38" width="4.9" height="10.98" fill="#a9c95e"/>
<rect x="465.91" y="270.29" width="4.9" height="99.46" fill="#8f9aec"/>
<rect x="465.91" y="262.76" width="4.9" height="7.53" fill="#ec8a8a"/>
<rect x="465.91" y="253.35" width="4.9" height="9.41" fill="#d39bfb"/>
<rect x="465.91" y="250.52" width="4.9" height="2.82" fill="#6fbba6"/>
<rect x="465.91" y="198.44" width="4.9" height="52.08" fill="#99e4a8"/>
<rect x="465.91" y="188.40" width="4.9" height="10.04" fill="#a9c95e"/>
<rect x="471.84" y="272.11" width="4.9" height="97.64" fill="#8f9aec"/>
<rect x="471.84" y="264.58" width="4.9" height="7.53" fill="#ec8a8a"/>
<rect x="471.84" y="255.17" width="4.9" height="9.41" fill="#d39bfb"/>
<rect x="471.84" y="252.34" width="4.9" height="2.82" fill="#6fbba6"/>
<rect x="471.84" y="200.26" width="4.9" height="52.08" fill="#99e4a8"/>
<rect x="471.84" y="190.22" width="4.9" height="10.04" fill="#a9c95e"/>
<rect x="477.78" y="273.37" width="4.9" height="96.38" fill="#8f9aec"/>
<rect x="477.78" y="265.84" width="4.9" height="7.53" fill="#ec8a8a"/>
<rect x="477.78" y="256.42" width="4.9" height="9.41" fill="#d39bfb"/>
<rect x="477.78" y="253.60" width="4.9" height="2.82" fill="#6fbba6"/>
<rect x="477.78" y="201.52" width="4.9" height="52.08" fill="#99e4a8"/>
<rect x="477.78" y="191.48" width="4.9" height="10.04" fill="#a9c95e"/>
<rect x="483.71" y="272.11" width="4.9" height="97.64" fill="#8f9aec"/>
<rect x="483.71" y="264.58" width="4.9" height="7.53" fill="#ec8a8a"/>
<rect x="483.71" y="255.17" width="4.9" height="9.41" fill="#d39bfb"/>
<rect x="483.71" y="252.34" width="4.9" height="2.82" fill="#6fbba6"/>
<rect x="483.71" y="200.26" width="4.9" height="52.08" fill="#99e4a8"/>
<rect x="483.71" y="190.22" width="4.9" height="10.04" fill="#a9c95e"/>
<rect x="489.65" y="270.29" width="4.9" height="99.46" fill="#8f9aec"/>
<rect x="489.65" y="262.76" width="4.9" height="7.53" fill="#ec8a8a"/>
<rect x="489.65" y="253.35" width="4.9" height="9.41" fill="#d39bfb"/>
<rect x="489.65" y="250.52" width="4.9" height="2.82" fill="#6fbba6"/>
<rect x="489.65" y="197.81" width="4.9" height="52.71" fill="#99e4a8"/>
<rect x="489.65" y="188.09" width="4.9" height="9.73" fill="#a9c95e"/>
<rect x="495.58" y="286.92" width="4.9" height="82.83" fill="#8f9aec"/>
<rect x="495.58" y="280.64" width="4.9" height="6.28" fill="#ec8a8a"/>
<rect x="495.58" y="271.86" width="4.9" height="8.79" fill="#d39bfb"/>
<rect x="495.58" y="269.98" width="4.9" height="1.88" fill="#6fbba6"/>
<rect x="495.58" y="224.17" width="4.9" height="45.81" fill="#99e4a8"/>
<rect x="495.58" y="214.76" width="4.9" height="9.41" fill="#a9c95e"/>
</g>
<path d="M74 244.5H502" stroke="#5a6a8a" stroke-opacity="0.12" stroke-width="1"/>
<path d="M74 307.5H502" stroke="#5a6a8a" stroke-opacity="0.12" stroke-width="1"/>
<path d="M102.8 432.5v4.5" stroke="#555" stroke-width="1"/>
<text x="103.3" y="445.7" font-size="10" fill="#92a8c4" text-anchor="end" letter-spacing="-0.107" transform="rotate(-25 103.3 445.7)">05:00 AM</text>
<path d="M175.5 432.5v4.5" stroke="#555" stroke-width="1"/>
<text x="176.0" y="445.7" font-size="10" fill="#92a8c4" text-anchor="end" letter-spacing="-0.107" transform="rotate(-25 176.0 445.7)">06:00 AM</text>
<path d="M248.6 432.5v4.5" stroke="#555" stroke-width="1"/>
<text x="249.1" y="445.7" font-size="10" fill="#92a8c4" text-anchor="end" letter-spacing="-0.107" transform="rotate(-25 249.1 445.7)">07:00 AM</text>
<path d="M322.3 432.5v4.5" stroke="#555" stroke-width="1"/>
<text x="322.8" y="445.7" font-size="10" fill="#92a8c4" text-anchor="end" letter-spacing="-0.107" transform="rotate(-25 322.8 445.7)">08:00 AM</text>
<path d="M395.3 432.5v4.5" stroke="#555" stroke-width="1"/>
<text x="395.8" y="445.7" font-size="10" fill="#92a8c4" text-anchor="end" letter-spacing="-0.107" transform="rotate(-25 395.8 445.7)">09:00 AM</text>
<path d="M468.7 432.5v4.5" stroke="#555" stroke-width="1"/>
<text x="469.2" y="445.7" font-size="10" fill="#92a8c4" text-anchor="end" letter-spacing="-0.107" transform="rotate(-25 469.2 445.7)">10:00 AM</text>
<text x="40.30" y="306.40" font-size="11" fill="#4c4c4c" font-weight="700" text-anchor="middle" letter-spacing="-0.471" transform="rotate(-90 40.30 306.40)">MicroSeconds</text>
</svg>
<svg width="1597" height="1305">
<path d="M640.2 181V426" stroke="#dfe5eb" stroke-width="1"/>
<text x="640.20" y="438.60" font-size="12" fill="#92a8c4" text-anchor="middle">0</text>
<path d="M695.7 181V426" stroke="#dfe5eb" stroke-width="1"/>
<text x="695.67" y="438.60" font-size="12" fill="#92a8c4" text-anchor="middle">2</text>
<path d="M751.1 181V426" stroke="#dfe5eb" stroke-width="1"/>
<text x="751.14" y="438.60" font-size="12" fill="#92a8c4" text-anchor="middle">4</text>
<path d="M806.6 181V426" stroke="#dfe5eb" stroke-width="1"/>
<text x="806.61" y="438.60" font-size="12" fill="#92a8c4" text-anchor="middle">6</text>
<path d="M862.1 181V426" stroke="#dfe5eb" stroke-width="1"/>
<text x="862.08" y="438.60" font-size="12" fill="#92a8c4" text-anchor="middle">8</text>
<path d="M917.6 181V426" stroke="#dfe5eb" stroke-width="1"/>
<text x="917.55" y="438.60" font-size="12" fill="#92a8c4" text-anchor="middle">10</text>
<path d="M973.0 181V426" stroke="#dfe5eb" stroke-width="1"/>
<text x="973.02" y="438.60" font-size="12" fill="#92a8c4" text-anchor="middle">12</text>
<path d="M1028.5 181V426" stroke="#dfe5eb" stroke-width="1"/>
<text x="1028.49" y="438.60" font-size="12" fill="#92a8c4" text-anchor="middle">14</text>
<rect x="640.2" y="220" width="164.4" height="44" fill="#b9ebfc"/>
<rect x="640.2" y="341" width="338.6" height="43.6" fill="#b9ebfc"/>
<path d="M640.2 220V264" stroke="#7fb5cc" stroke-opacity="0.16" stroke-width="1"/>
<path d="M695.7 220V264" stroke="#7fb5cc" stroke-opacity="0.16" stroke-width="1"/>
<path d="M751.1 220V264" stroke="#7fb5cc" stroke-opacity="0.16" stroke-width="1"/>
<path d="M640.2 341V384.6" stroke="#7fb5cc" stroke-opacity="0.16" stroke-width="1"/>
<path d="M695.7 341V384.6" stroke="#7fb5cc" stroke-opacity="0.16" stroke-width="1"/>
<path d="M751.1 341V384.6" stroke="#7fb5cc" stroke-opacity="0.16" stroke-width="1"/>
<path d="M806.6 341V384.6" stroke="#7fb5cc" stroke-opacity="0.16" stroke-width="1"/>
<path d="M862.1 341V384.6" stroke="#7fb5cc" stroke-opacity="0.16" stroke-width="1"/>
<path d="M917.6 341V384.6" stroke="#7fb5cc" stroke-opacity="0.16" stroke-width="1"/>
<path d="M973.0 341V384.6" stroke="#7fb5cc" stroke-opacity="0.16" stroke-width="1"/>
<text x="630.00" y="244.90" font-size="10.5" fill="#92a8c4" text-anchor="end" letter-spacing="-0.367">david-eks</text>
<text x="630.00" y="365.90" font-size="10.5" fill="#92a8c4" text-anchor="end" letter-spacing="-0.260">k8s-freno-2</text>
<path d="M635 242.5h5.2M635 363.5h5.2" stroke="#444" stroke-width="1"/>
<text x="833.70" y="448.30" font-size="11" fill="#555" font-weight="700" text-anchor="middle" letter-spacing="-0.367">Requests Rate</text>
<text x="572.30" y="302.40" font-size="11" fill="#4c4c4c" font-weight="700" text-anchor="middle" letter-spacing="-0.428" transform="rotate(-90 572.30 302.40)">cluster</text>
</svg>
<svg width="1597" height="1305">
<path d="M1123 357.5H1565.5" stroke="#dfe5eb" stroke-width="1"/>
<text x="1117.20" y="360.80" font-size="11.5" fill="#92a8c4" text-anchor="end">0</text>
<path d="M1123 322.5H1565.5" stroke="#dfe5eb" stroke-width="1"/>
<text x="1117.20" y="325.80" font-size="11.5" fill="#92a8c4" text-anchor="end">1</text>
<path d="M1123 287.5H1565.5" stroke="#dfe5eb" stroke-width="1"/>
<text x="1117.20" y="290.80" font-size="11.5" fill="#92a8c4" text-anchor="end">2</text>
<path d="M1123 251.5H1565.5" stroke="#dfe5eb" stroke-width="1"/>
<text x="1117.20" y="254.80" font-size="11.5" fill="#92a8c4" text-anchor="end">3</text>
<path d="M1123 216.5H1565.5" stroke="#dfe5eb" stroke-width="1"/>
<text x="1117.20" y="219.80" font-size="11.5" fill="#92a8c4" text-anchor="end">4</text>
<path d="M1123 181.5H1565.5" stroke="#dfe5eb" stroke-width="1"/>
<text x="1117.20" y="184.80" font-size="11.5" fill="#92a8c4" text-anchor="end">5</text>
<polyline points="1132.2,356.6 1517.0,356.6" fill="none" stroke="#3b57e2" stroke-width="3" stroke-dasharray="3 6" stroke-dashoffset="0"/>
<polyline points="1132.2,354.8 1517.0,354.8" fill="none" stroke="#c9c912" stroke-width="3" stroke-dasharray="3 6" stroke-dashoffset="0"/>
<polyline points="1132.2,353.1 1517.0,353.1" fill="none" stroke="#5b9b12" stroke-width="3" stroke-dasharray="3 6" stroke-dashoffset="0"/>
<polyline points="1132.2,350.3 1517.0,350.3" fill="none" stroke="#19a3d3" stroke-width="3" stroke-dasharray="3 6" stroke-dashoffset="0"/>
<polyline points="1132.2,345.7 1517.0,345.7" fill="none" stroke="#8c1080" stroke-width="3" stroke-dasharray="3 6" stroke-dashoffset="0"/>
<polyline points="1132.2,344.6 1517.0,344.6" fill="none" stroke="#c9c912" stroke-width="3" stroke-dasharray="3 6" stroke-dashoffset="0"/>
<polyline points="1132.2,339.7 1517.0,339.7" fill="none" stroke="#8c1080" stroke-width="3" stroke-dasharray="3 6" stroke-dashoffset="0"/>
<polyline points="1132.2,351.0 1138.4,346.5 1144.5,342.6 1150.7,349.0 1156.9,352.6 1163.1,354.4 1169.2,356.2 1175.4,350.4 1181.6,345.9 1187.7,343.7 1193.9,352.2 1200.1,354.4 1206.2,356.2 1212.4,351.5 1218.6,348.8 1224.8,350.8 1230.9,342.1 1237.1,344.9 1243.3,351.5 1249.4,354.1 1255.6,356.2 1261.8,354.5 1267.9,346.7 1274.1,349.9 1280.3,351.5 1286.5,355.0 1292.6,356.2 1298.8,354.3 1305.0,350.8 1311.1,344.0 1317.3,346.1 1323.5,347.8 1329.6,352.9 1335.8,353.8 1342.0,354.3 1348.2,352.1 1354.3,342.6 1360.5,342.1 1366.7,346.2 1372.8,351.2 1379.0,356.2 1385.2,356.2 1391.3,351.9 1397.5,350.4 1403.7,344.1 1409.9,349.9 1416.0,350.1 1422.2,356.1 1428.4,350.0 1434.5,347.2 1440.7,350.9 1446.9,348.8 1453.0,345.7 1459.2,353.4 1465.4,351.1 1471.6,354.7 1477.7,353.6 1483.9,345.6 1490.1,344.0 1496.2,351.2 1502.4,356.2 1508.6,356.2" fill="none" stroke="#ff7b1c" stroke-width="3" stroke-dasharray="3 5" stroke-dashoffset="0"/>
<polyline points="1132.2,311.3 1548.0,311.3 1556.0,316.9" fill="none" stroke="#3b57e2" stroke-width="3" stroke-dasharray="3 6" stroke-dashoffset="0"/>
<polyline points="1132.2,310.3 1138.4,310.3 1144.5,310.8 1150.7,311.0 1156.9,311.2 1163.1,311.4 1169.2,310.9 1175.4,311.1 1181.6,310.9 1187.7,310.9 1193.9,311.1 1200.1,310.7 1206.2,311.0 1212.4,310.8 1218.6,311.1 1224.8,311.0 1230.9,311.1 1237.1,311.2 1243.3,310.6 1249.4,310.4 1255.6,310.7 1261.8,310.4 1267.9,310.8 1274.1,310.8 1280.3,310.5 1286.5,310.5 1292.6,310.9 1298.8,310.4 1305.0,310.8 1311.1,311.0 1317.3,310.6 1323.5,310.8 1329.6,311.0 1335.8,311.2 1342.0,311.4 1348.2,311.0 1354.3,311.1 1360.5,310.9 1366.7,310.9 1372.8,310.9 1379.0,310.4 1385.2,310.6 1391.3,310.6 1397.5,310.3 1403.7,310.8 1409.9,311.0 1416.0,310.6 1422.2,310.4 1428.4,310.7 1434.5,311.0 1440.7,310.7 1446.9,310.3 1453.0,310.7 1459.2,310.4 1465.4,310.2 1471.6,310.3 1477.7,310.5 1483.9,311.0 1490.1,311.3 1496.2,310.7 1502.4,310.9 1508.6,310.7 1514.7,310.9 1520.9,310.6 1527.1,310.5 1533.3,310.8 1539.4,311.0 1545.6,310.7 1550.0,311.6 1556.0,315.1" fill="none" stroke="#ff7b1c" stroke-width="3" stroke-dasharray="3 6" stroke-dashoffset="0.5"/>
<polyline points="1132.2,300.2 1138.4,300.1 1144.5,299.8 1150.7,299.8 1156.9,300.0 1163.1,299.7 1169.2,300.1 1175.4,300.4 1181.6,300.5 1187.7,300.3 1193.9,300.6 1200.1,300.6 1206.2,300.5 1212.4,300.2 1218.6,300.5 1224.8,300.4 1230.9,299.9 1237.1,299.5 1243.3,299.6 1249.4,299.6 1255.6,299.7 1261.8,300.1 1267.9,300.5 1274.1,300.7 1280.3,300.1 1286.5,299.9 1292.6,299.5 1298.8,300.1 1305.0,300.0 1311.1,300.0 1317.3,299.8 1323.5,300.0 1329.6,299.6 1335.8,300.1 1342.0,300.0 1348.2,299.8 1354.3,299.6 1360.5,299.5 1366.7,299.6 1372.8,299.5 1379.0,299.3 1385.2,299.7 1391.3,299.7 1397.5,299.5 1403.7,299.4 1409.9,299.7 1416.0,299.6 1422.2,299.4 1428.4,299.6 1434.5,299.7 1440.7,299.9 1446.9,299.9 1453.0,299.8 1459.2,300.3 1465.4,300.0 1471.6,299.6 1477.7,299.4 1483.9,299.5 1490.1,299.8 1496.2,299.7 1502.4,299.7 1508.6,299.9 1514.7,299.7 1520.9,300.1 1527.1,299.9 1533.3,300.3 1539.4,300.1 1545.6,300.1 1556.0,295.8 1560.0,301.1" fill="none" stroke="#e3262c" stroke-width="3" stroke-dasharray="3 6" stroke-dashoffset="0"/>
<polyline points="1132.2,256.5 1138.4,256.8 1144.5,256.5 1150.7,255.4 1156.9,256.9 1163.1,258.5 1169.2,258.6 1175.4,257.4 1181.6,258.3 1187.7,258.8 1193.9,256.9 1200.1,256.5 1206.2,256.9 1212.4,255.8 1218.6,256.9 1224.8,256.4 1230.9,257.7 1237.1,257.7 1243.3,256.5 1249.4,255.4 1255.6,254.9 1261.8,256.2 1267.9,256.3 1274.1,257.2 1280.3,258.3 1286.5,257.9 1292.6,256.5 1298.8,255.6 1305.0,255.6 1311.1,254.8 1317.3,256.4 1323.5,257.7 1329.6,257.7 1335.8,258.2 1342.0,258.6 1348.2,258.3 1354.3,257.4 1360.5,257.3 1366.7,257.8 1372.8,256.5 1379.0,255.2 1385.2,256.1 1391.3,257.9 1397.5,259.1 1403.7,257.1 1409.9,258.6 1416.0,257.3 1422.2,257.0 1428.4,257.7 1434.5,256.5 1440.7,258.3 1446.9,259.0 1453.0,258.4 1459.2,259.4 1465.4,257.4 1471.6,258.1 1477.7,258.9 1483.9,259.6 1490.1,258.2 1496.2,257.9 1502.4,257.2 1508.6,256.7 1514.7,255.9 1520.9,254.9 1527.1,255.2 1533.3,256.9 1539.4,257.1 1545.6,258.1 1556.0,265.9" fill="none" stroke="#5a4900" stroke-width="3" stroke-dasharray="3 6" stroke-dashoffset="0"/>
<polyline points="1132.2,232.4 1138.4,232.1 1144.5,232.6 1150.7,232.8 1156.9,232.9 1163.1,232.4 1169.2,232.3 1175.4,232.2 1181.6,231.9 1187.7,232.2 1193.9,231.9 1200.1,231.5 1206.2,232.4 1212.4,231.8 1218.6,231.7 1224.8,232.5 1230.9,232.5 1237.1,232.3 1243.3,231.7 1249.4,232.1 1255.6,232.1 1261.8,231.7 1267.9,231.5 1274.1,231.2 1280.3,231.7 1286.5,231.8 1292.6,232.4 1298.8,232.1 1305.0,231.7 1311.1,231.8 1317.3,231.7 1323.5,232.4 1329.6,231.8 1335.8,231.3 1342.0,231.1 1348.2,231.5 1354.3,231.4 1360.5,232.1 1366.7,231.6 1372.8,231.4 1379.0,232.0 1385.2,232.7 1391.3,232.6 1397.5,232.5 1403.7,232.0 1409.9,232.2 1416.0,232.9 1422.2,232.2 1428.4,232.9 1434.5,232.3 1440.7,232.7 1446.9,232.8 1453.0,232.2 1459.2,232.8 1465.4,233.1 1471.6,232.8 1477.7,232.3 1483.9,231.8 1490.1,231.8 1496.2,231.4 1502.4,231.8 1508.6,231.4 1514.7,232.3 1520.9,232.7 1527.1,232.5 1533.3,232.8 1539.4,232.3 1545.6,232.1 1553.0,230.1 1558.0,251.9 1561.0,294.0 1563.0,350.3" fill="none" stroke="#ff70e2" stroke-width="3" stroke-dasharray="3 6" stroke-dashoffset="0"/>
<polyline points="1132.2,187.8 1138.4,188.2 1144.5,189.8 1150.7,190.4 1156.9,188.2 1163.1,186.7 1169.2,189.4 1175.4,187.6 1181.6,186.0 1187.7,187.3 1193.9,187.9 1200.1,190.1 1206.2,189.8 1212.4,189.7 1218.6,189.1 1224.8,191.8 1230.9,188.5 1237.1,188.8 1243.3,189.7 1249.4,188.1 1255.6,188.4 1261.8,188.9 1267.9,188.2 1274.1,191.1 1280.3,190.3 1286.5,190.5 1292.6,187.7 1298.8,186.3 1305.0,188.8 1311.1,189.3 1317.3,191.4 1323.5,191.0 1329.6,188.8 1335.8,187.0 1342.0,188.2 1348.2,189.7 1354.3,191.3 1360.5,190.0 1366.7,187.6 1372.8,190.4 1379.0,188.6 1385.2,191.5 1391.3,192.4 1397.5,192.7 1403.7,190.5 1409.9,191.1 1416.0,191.3 1422.2,190.0 1428.4,191.9 1434.5,189.8 1440.7,191.7 1446.9,190.8 1453.0,191.7 1459.2,192.4 1465.4,191.2 1471.6,190.9 1477.7,191.0 1483.9,190.9 1490.1,190.3 1496.2,191.8 1502.4,192.5 1508.6,190.7 1514.7,189.5 1520.9,189.4 1527.1,187.6 1533.3,187.9 1541.0,187.2 1547.0,184.0 1551.0,187.9 1556.0,181.6 1558.5,195.6 1560.5,251.9 1562.5,301.1 1563.3,336.2" fill="none" stroke="#e3262c" stroke-width="3" stroke-dasharray="3 6" stroke-dashoffset="0"/>
<polyline points="1519.0,268.7 1546.0,271.2 1553.0,280.0 1557.0,290.5" fill="none" stroke="#e3262c" stroke-width="3" stroke-dasharray="3 6" stroke-dashoffset="1"/>
<polyline points="1520.5,287.0 1548.0,304.6 1551.0,296.8 1556.0,311.6" fill="none" stroke="#3b57e2" stroke-width="3" stroke-dasharray="3 6" stroke-dashoffset="0"/>
<polyline points="1527.0,322.2 1548.0,322.2 1556.0,327.4 1562.0,353.8" fill="none" stroke="#8c1080" stroke-width="3" stroke-dasharray="3 6" stroke-dashoffset="0"/>
<polyline points="1515.0,347.5 1518.0,329.2 1522.0,322.2 1524.0,330.9 1517.0,338.0" fill="none" stroke="#ff7b1c" stroke-width="3" stroke-dasharray="3 6" stroke-dashoffset="0"/>
<polyline points="1546.0,333.4 1551.0,330.9 1559.0,346.8" fill="none" stroke="#ff7b1c" stroke-width="3" stroke-dasharray="3 6" stroke-dashoffset="0"/>
<polyline points="1519.2,339.0 1555.0,339.0 1561.0,349.6" fill="none" stroke="#c9c912" stroke-width="3" stroke-dasharray="3 4.2" stroke-dashoffset="0"/>
<polyline points="1519.6,340.4 1555.0,340.4 1561.0,351.0" fill="none" stroke="#19a3d3" stroke-width="3" stroke-dasharray="3 4.2" stroke-dashoffset="0"/>
<polyline points="1517.3,344.6 1555.0,344.6 1561.0,355.2" fill="none" stroke="#19a3d3" stroke-width="3" stroke-dasharray="3 4.2" stroke-dashoffset="0"/>
<polyline points="1517.3,346.8 1555.0,346.8 1561.0,356.6" fill="none" stroke="#e9a6f5" stroke-width="3" stroke-dasharray="3 4.2" stroke-dashoffset="0"/>
<polyline points="1519.7,348.5 1555.0,348.5 1561.0,356.6" fill="none" stroke="#8c1080" stroke-width="3" stroke-dasharray="3 4.2" stroke-dashoffset="0"/>
<polyline points="1516.9,350.3 1555.0,350.3 1561.0,356.6" fill="none" stroke="#5a4900" stroke-width="3" stroke-dasharray="3 4.2" stroke-dashoffset="0"/>
<polyline points="1520.0,352.4 1555.0,352.4 1561.0,356.6" fill="none" stroke="#5b9b12" stroke-width="3" stroke-dasharray="3 4.2" stroke-dashoffset="0"/>
<polyline points="1519.6,353.8 1555.0,353.8 1561.0,356.6" fill="none" stroke="#c9c912" stroke-width="3" stroke-dasharray="3 4.2" stroke-dashoffset="0"/>
<polyline points="1516.5,355.2 1555.0,355.2 1561.0,356.6" fill="none" stroke="#ff7b1c" stroke-width="3" stroke-dasharray="3 4.2" stroke-dashoffset="0"/>
<polyline points="1517.0,356.6 1555.0,356.6 1561.0,356.6" fill="none" stroke="#3b57e2" stroke-width="3" stroke-dasharray="3 4.2" stroke-dashoffset="0"/>
<path d="M1156.3 357.5v4.5" stroke="#555" stroke-width="1"/>
<text x="1156.8" y="370.7" font-size="10" fill="#92a8c4" text-anchor="end" letter-spacing="-0.107" transform="rotate(-25 1156.8 370.7)">05:00 AM</text>
<path d="M1230.3 357.5v4.5" stroke="#555" stroke-width="1"/>
<text x="1230.8" y="370.7" font-size="10" fill="#92a8c4" text-anchor="end" letter-spacing="-0.107" transform="rotate(-25 1230.8 370.7)">06:00 AM</text>
<path d="M1304.3 357.5v4.5" stroke="#555" stroke-width="1"/>
<text x="1304.8" y="370.7" font-size="10" fill="#92a8c4" text-anchor="end" letter-spacing="-0.107" transform="rotate(-25 1304.8 370.7)">07:00 AM</text>
<path d="M1378.3 357.5v4.5" stroke="#555" stroke-width="1"/>
<text x="1378.8" y="370.7" font-size="10" fill="#92a8c4" text-anchor="end" letter-spacing="-0.107" transform="rotate(-25 1378.8 370.7)">08:00 AM</text>
<path d="M1452.3 357.5v4.5" stroke="#555" stroke-width="1"/>
<text x="1452.8" y="370.7" font-size="10" fill="#92a8c4" text-anchor="end" letter-spacing="-0.107" transform="rotate(-25 1452.8 370.7)">09:00 AM</text>
<path d="M1526.3 357.5v4.5" stroke="#555" stroke-width="1"/>
<text x="1526.8" y="370.7" font-size="10" fill="#92a8c4" text-anchor="end" letter-spacing="-0.107" transform="rotate(-25 1526.8 370.7)">10:00 AM</text>
<text x="1104.00" y="268.90" font-size="11" fill="#4c4c4c" font-weight="700" text-anchor="middle" letter-spacing="-0.492" transform="rotate(-90 1104.00 268.90)">Requests Rate</text>
<clipPath id="lg3"><rect x="1080" y="395" width="500" height="73.2"/></clipPath><g clip-path="url(#lg3)">
<circle cx="1099.8" cy="406.6" r="5" fill="#8e1578"/>
<text x="1110.10" y="410.90" font-size="12" fill="#333" letter-spacing="0.072">client=Browser metric=sum(rate(apiserver_request_count))</text>
<circle cx="1099.8" cy="435.6" r="5" fill="#c9c912"/>
<text x="1110.10" y="439.85" font-size="12" fill="#333" letter-spacing="0.081">client=Fluent-Bit metric=sum(rate(apiserver_request_count))</text>
<circle cx="1099.8" cy="464.5" r="5" fill="#4f8c10"/>
<text x="1110.10" y="468.80" font-size="12" fill="#333" letter-spacing="0.099">client=Go-http-client/1.1 metric=sum(rate(apiserver_request_count))</text>
</g>
</svg>
<svg width="1597" height="1305">
<path d="M52.5 557.5H502" stroke="#dfe5eb" stroke-width="1"/>
<text x="47.20" y="560.80" font-size="11.5" fill="#92a8c4" text-anchor="end">30</text>
<path d="M52.5 607.5H502" stroke="#dfe5eb" stroke-width="1"/>
<text x="47.20" y="610.80" font-size="11.5" fill="#92a8c4" text-anchor="end">20</text>
<path d="M52.5 658.5H502" stroke="#dfe5eb" stroke-width="1"/>
<text x="47.20" y="661.80" font-size="11.5" fill="#92a8c4" text-anchor="end">10</text>
<path d="M52.5 708.5H502" stroke="#dfe5eb" stroke-width="1"/>
<text x="47.20" y="711.80" font-size="11.5" fill="#92a8c4" text-anchor="end">0</text>
<path d="M52.5 758.5H502" stroke="#dfe5eb" stroke-width="1"/>
<text x="47.20" y="761.80" font-size="11.5" fill="#92a8c4" text-anchor="end">-10</text>
<polyline points="77.8,640.9 118.2,641.9 158.6,640.9 199.0,640.9 239.4,596.9 279.8,598.0 320.3,600.0 360.7,600.0 401.1,600.0 441.5,600.0 481.9,637.6" fill="none" stroke="#2bb996" stroke-width="1.4" stroke-linejoin="round"/>
<polyline points="77.8,667.6 118.2,667.6 158.6,669.1 199.0,669.1 239.4,666.6 279.8,668.0 320.3,669.1 360.7,669.1 401.1,667.6 441.5,666.6 481.9,681.9" fill="none" stroke="#9a2590" stroke-width="1.4" stroke-linejoin="round"/>
<polyline points="77.8,707.2 118.2,707.2 158.6,707.0 199.0,707.0 239.4,704.7 279.8,705.7 320.3,705.7 360.7,705.7 401.1,705.7 441.5,705.7 481.9,707.0" fill="none" stroke="#2bb996" stroke-width="1.4" stroke-linejoin="round"/>
<polyline points="77.8,707.5 118.2,707.5 158.6,707.5 199.0,707.5 239.4,707.5 279.8,707.5 320.3,707.5 360.7,707.5 401.1,707.5 441.5,707.5 481.9,707.5" fill="none" stroke="#2a4a5a" stroke-width="1.2" stroke-linejoin="round"/>
<polyline points="77.8,708.1 118.2,708.1 158.6,708.1 199.0,708.1 239.4,708.1 279.8,708.1 320.3,708.1 360.7,708.1 401.1,708.1 441.5,708.1 481.9,708.1" fill="none" stroke="#b04aa6" stroke-width="1.3" stroke-linejoin="round"/>
<path d="M118.4 758.5v4.5" stroke="#555" stroke-width="1"/>
<text x="118.9" y="771.7" font-size="10" fill="#92a8c4" text-anchor="end" letter-spacing="-0.107" transform="rotate(-25 118.9 771.7)">09:40 AM</text>
<path d="M199.5 758.5v4.5" stroke="#555" stroke-width="1"/>
<text x="200.0" y="771.7" font-size="10" fill="#92a8c4" text-anchor="end" letter-spacing="-0.107" transform="rotate(-25 200.0 771.7)">09:50 AM</text>
<path d="M280.7 758.5v4.5" stroke="#555" stroke-width="1"/>
<text x="281.2" y="771.7" font-size="10" fill="#92a8c4" text-anchor="end" letter-spacing="-0.107" transform="rotate(-25 281.2 771.7)">10:00 AM</text>
<path d="M360.5 758.5v4.5" stroke="#555" stroke-width="1"/>
<text x="361.0" y="771.7" font-size="10" fill="#92a8c4" text-anchor="end" letter-spacing="-0.107" transform="rotate(-25 361.0 771.7)">10:10 AM</text>
<path d="M441.3 758.5v4.5" stroke="#555" stroke-width="1"/>
<text x="441.8" y="771.7" font-size="10" fill="#92a8c4" text-anchor="end" letter-spacing="-0.107" transform="rotate(-25 441.8 771.7)">10:20 AM</text>
<circle cx="36.2" cy="807.2" r="5" fill="#8e1578"/>
<text x="46.30" y="811.50" font-size="12" fill="#333" letter-spacing="0.067">cluster=david-eks metric=sum(rate(apiserver_request_count))</text>
<circle cx="36.2" cy="833.6" r="5" fill="#2bb996"/>
<text x="46.30" y="837.90" font-size="12" fill="#333" letter-spacing="0.068">cluster=k8s-freno-2 metric=sum(rate(apiserver_request_count))</text>
</svg>
<svg width="1597" height="1305">
<path d="M598.5 557.5H603" stroke="#d9dee6" stroke-width="1"/><path d="M603 557.5H1034" stroke="#c9c3f2" stroke-width="1"/>
<text x="593.00" y="560.90" font-size="11.5" fill="#92a8c4" text-anchor="end">3K</text>
<path d="M598.5 630.5H603" stroke="#d9dee6" stroke-width="1"/><path d="M603 630.5H1034" stroke="#c9c3f2" stroke-width="1"/>
<text x="593.00" y="633.90" font-size="11.5" fill="#92a8c4" text-anchor="end">2K</text>
<path d="M598.5 703.5H603" stroke="#d9dee6" stroke-width="1"/><path d="M603 703.5H1034" stroke="#c9c3f2" stroke-width="1"/>
<text x="593.00" y="706.90" font-size="11.5" fill="#92a8c4" text-anchor="end">1K</text>
<path d="M598.5 775.5H603" stroke="#d9dee6" stroke-width="1"/><path d="M603 775.5H1034" stroke="#d5dbe6" stroke-width="1"/>
<text x="593.00" y="778.90" font-size="11.5" fill="#92a8c4" text-anchor="end">0</text>
<polyline points="604.4,697.3 607.0,617.9 609.5,603.4 612.1,608.5 614.6,616.5 617.2,615.7 619.8,618.3 622.3,617.0 624.9,615.6 627.5,616.5 630.0,615.7 632.6,618.1 635.1,617.0 637.7,617.7 640.3,616.8 642.8,616.7 645.4,618.4 647.9,617.8 650.5,617.6 653.1,615.7 655.6,616.1 658.2,618.0 660.8,616.1 663.3,618.0 665.9,616.6 668.4,618.1 671.0,612.8 673.6,615.7 676.1,617.8 678.7,617.8 681.3,615.5 683.8,602.6 686.4,614.6 688.9,615.6 691.5,616.8 694.1,616.4 696.6,617.8 699.2,615.6 701.7,616.4 704.3,615.5 706.9,615.8 709.4,617.5 712.0,617.4 714.6,617.9 717.1,618.0 719.7,618.2 722.2,617.5 724.8,616.6 727.4,618.4 729.9,616.4 732.5,617.4 735.0,617.5 737.6,616.0 740.2,617.0 742.7,617.5 745.3,617.0 747.9,616.3 750.4,618.3 753.0,615.5 755.5,566.2 758.1,607.7 760.7,613.6 763.2,618.4 765.8,616.1 768.3,617.3 770.9,616.7 773.5,618.4 776.0,618.3 778.6,617.9 781.2,615.6 783.7,617.8 786.3,616.2 788.8,615.7 791.4,615.6 794.0,617.4 796.5,617.4 799.1,616.9 801.6,616.1 804.2,618.1 806.8,616.2 809.3,616.1 811.9,615.9 814.5,618.3 817.0,615.6 819.6,618.2 822.1,617.4 824.7,616.6 827.3,615.7 829.8,617.4 832.4,615.7 835.0,616.8 837.5,617.5 840.1,617.5 842.6,617.9 845.2,618.2 847.8,620.8 850.3,575.0 852.9,615.7 855.4,618.0 858.0,618.3 860.6,615.5 863.1,616.8 865.7,617.2 868.3,617.7 870.8,616.7 873.4,616.0 875.9,617.1 878.5,617.2 881.1,618.3 883.6,615.7 886.2,618.3 888.7,617.0 891.3,615.9 893.9,618.0 896.4,616.2 899.0,615.6 901.6,616.6 904.1,616.1 906.7,618.1 909.2,617.1 911.8,618.0 914.4,615.9 916.9,617.6 919.5,617.1 922.0,615.5 924.6,615.9 927.2,615.5 929.7,617.1 932.3,617.0 934.9,616.3 937.4,617.0 940.0,617.6 942.5,617.2 945.1,618.0 947.7,617.3 950.2,615.5 952.8,615.6 955.3,616.6 957.9,616.9 960.5,617.4 963.0,618.2 965.6,617.6 968.2,616.1 970.7,615.8 973.3,617.4 975.8,616.1 978.4,616.1 981.0,616.4 983.5,616.5 986.1,616.2 988.7,617.3 991.2,616.3 993.8,617.6 996.3,617.0 998.9,616.1 1001.5,616.4 1004.0,617.6 1006.6,615.6 1009.1,616.5 1011.7,616.7 1014.3,618.4 1016.8,616.8 1019.4,617.7 1022.0,616.4 1024.5,617.1 1027.1,612.1 1029.6,615.7 1032.2,700.2" fill="none" stroke="#8fe1fb" stroke-width="3.0" stroke-linejoin="round" stroke-linecap="round"/>
<path d="M604.4 697.3h0M607.0 617.9h0M609.5 603.4h0M612.1 608.5h0M614.6 616.5h0M617.2 615.7h0M619.8 618.3h0M622.3 617.0h0M624.9 615.6h0M627.5 616.5h0M630.0 615.7h0M632.6 618.1h0M635.1 617.0h0M637.7 617.7h0M640.3 616.8h0M642.8 616.7h0M645.4 618.4h0M647.9 617.8h0M650.5 617.6h0M653.1 615.7h0M655.6 616.1h0M658.2 618.0h0M660.8 616.1h0M663.3 618.0h0M665.9 616.6h0M668.4 618.1h0M671.0 612.8h0M673.6 615.7h0M676.1 617.8h0M678.7 617.8h0M681.3 615.5h0M683.8 602.6h0M686.4 614.6h0M688.9 615.6h0M691.5 616.8h0M694.1 616.4h0M696.6 617.8h0M699.2 615.6h0M701.7 616.4h0M704.3 615.5h0M706.9 615.8h0M709.4 617.5h0M712.0 617.4h0M714.6 617.9h0M717.1 618.0h0M719.7 618.2h0M722.2 617.5h0M724.8 616.6h0M727.4 618.4h0M729.9 616.4h0M732.5 617.4h0M735.0 617.5h0M737.6 616.0h0M740.2 617.0h0M742.7 617.5h0M745.3 617.0h0M747.9 616.3h0M750.4 618.3h0M753.0 615.5h0M755.5 566.2h0M758.1 607.7h0M760.7 613.6h0M763.2 618.4h0M765.8 616.1h0M768.3 617.3h0M770.9 616.7h0M773.5 618.4h0M776.0 618.3h0M778.6 617.9h0M781.2 615.6h0M783.7 617.8h0M786.3 616.2h0M788.8 615.7h0M791.4 615.6h0M794.0 617.4h0M796.5 617.4h0M799.1 616.9h0M801.6 616.1h0M804.2 618.1h0M806.8 616.2h0M809.3 616.1h0M811.9 615.9h0M814.5 618.3h0M817.0 615.6h0M819.6 618.2h0M822.1 617.4h0M824.7 616.6h0M827.3 615.7h0M829.8 617.4h0M832.4 615.7h0M835.0 616.8h0M837.5 617.5h0M840.1 617.5h0M842.6 617.9h0M845.2 618.2h0M847.8 620.8h0M850.3 575.0h0M852.9 615.7h0M855.4 618.0h0M858.0 618.3h0M860.6 615.5h0M863.1 616.8h0M865.7 617.2h0M868.3 617.7h0M870.8 616.7h0M873.4 616.0h0M875.9 617.1h0M878.5 617.2h0M881.1 618.3h0M883.6 615.7h0M886.2 618.3h0M888.7 617.0h0M891.3 615.9h0M893.9 618.0h0M896.4 616.2h0M899.0 615.6h0M901.6 616.6h0M904.1 616.1h0M906.7 618.1h0M909.2 617.1h0M911.8 618.0h0M914.4 615.9h0M916.9 617.6h0M919.5 617.1h0M922.0 615.5h0M924.6 615.9h0M927.2 615.5h0M929.7 617.1h0M932.3 617.0h0M934.9 616.3h0M937.4 617.0h0M940.0 617.6h0M942.5 617.2h0M945.1 618.0h0M947.7 617.3h0M950.2 615.5h0M952.8 615.6h0M955.3 616.6h0M957.9 616.9h0M960.5 617.4h0M963.0 618.2h0M965.6 617.6h0M968.2 616.1h0M970.7 615.8h0M973.3 617.4h0M975.8 616.1h0M978.4 616.1h0M981.0 616.4h0M983.5 616.5h0M986.1 616.2h0M988.7 617.3h0M991.2 616.3h0M993.8 617.6h0M996.3 617.0h0M998.9 616.1h0M1001.5 616.4h0M1004.0 617.6h0M1006.6 615.6h0M1009.1 616.5h0M1011.7 616.7h0M1014.3 618.4h0M1016.8 616.8h0M1019.4 617.7h0M1022.0 616.4h0M1024.5 617.1h0M1027.1 612.1h0M1029.6 615.7h0M1032.2 700.2h0" stroke="#8fe1fb" stroke-width="4.7" stroke-linecap="round" fill="none"/>
<polyline points="604.4,775.7 607.0,775.6 609.5,765.7 612.1,773.0 614.6,774.4 617.2,775.5 619.8,775.5 622.3,775.6 624.9,775.5 627.5,775.5 630.0,775.6 632.6,775.6 635.1,775.8 637.7,775.5 640.3,775.5 642.8,775.7 645.4,775.6 647.9,775.6 650.5,775.6 653.1,775.8 655.6,775.5 658.2,775.6 660.8,775.6 663.3,775.7 665.9,775.6 668.4,775.5 671.0,771.5 673.6,774.8 676.1,775.8 678.7,775.8 681.3,767.2 683.8,763.5 686.4,771.5 688.9,774.1 691.5,775.6 694.1,773.7 696.6,773.9 699.2,775.7 701.7,775.8 704.3,775.8 706.9,775.7 709.4,775.8 712.0,775.8 714.6,775.8 717.1,775.7 719.7,775.7 722.2,775.6 724.8,775.6 727.4,775.7 729.9,775.5 732.5,775.8 735.0,775.7 737.6,775.7 740.2,775.7 742.7,775.8 745.3,775.5 747.9,775.7 750.4,775.8 753.0,775.6 755.5,772.3 758.1,771.9 760.7,773.4 763.2,772.3 765.8,773.7 768.3,774.1 770.9,774.6 773.5,773.9 776.0,774.7 778.6,773.7 781.2,773.9 783.7,774.9 786.3,774.6 788.8,774.4 791.4,775.0 794.0,775.6 796.5,775.7 799.1,775.5 801.6,775.8 804.2,775.8 806.8,775.6 809.3,775.6 811.9,775.8 814.5,775.6 817.0,775.5 819.6,775.7 822.1,775.7 824.7,775.7 827.3,775.7 829.8,775.5 832.4,775.7 835.0,775.5 837.5,775.5 840.1,775.6 842.6,775.7 845.2,775.5 847.8,775.6 850.3,775.7 852.9,775.7 855.4,775.5 858.0,775.6 860.6,775.7 863.1,775.7 865.7,775.8 868.3,775.6 870.8,775.7 873.4,775.7 875.9,775.5 878.5,775.5 881.1,775.8 883.6,775.6 886.2,775.7 888.7,775.5 891.3,775.5 893.9,775.7 896.4,775.7 899.0,775.8 901.6,775.5 904.1,775.7 906.7,775.6 909.2,775.7 911.8,775.6 914.4,775.6 916.9,775.6 919.5,775.8 922.0,775.6 924.6,775.7 927.2,775.6 929.7,775.7 932.3,775.7 934.9,775.6 937.4,775.7 940.0,775.7 942.5,775.6 945.1,775.6 947.7,775.8 950.2,775.7 952.8,775.7 955.3,775.5 957.9,775.5 960.5,775.6 963.0,775.8 965.6,775.5 968.2,775.7 970.7,775.6 973.3,775.6 975.8,775.6 978.4,775.7 981.0,775.5 983.5,775.7 986.1,775.7 988.7,775.5 991.2,775.8 993.8,775.7 996.3,775.5 998.9,775.8 1001.5,775.5 1004.0,775.6 1006.6,775.7 1009.1,775.7 1011.7,775.5 1014.3,775.5 1016.8,775.8 1019.4,775.7 1022.0,775.6 1024.5,775.6 1027.1,775.7 1029.6,775.8 1032.2,775.6" fill="none" stroke="#1c99cf" stroke-width="2.6" stroke-linejoin="round" stroke-linecap="round"/>
<path d="M609.5 765.7h0M612.1 773.0h0M671.0 771.5h0M681.3 767.2h0M683.8 763.5h0M686.4 771.5h0M688.9 774.1h0M694.1 773.7h0M696.6 773.9h0M755.5 772.3h0M758.1 771.9h0M760.7 773.4h0M763.2 772.3h0M765.8 773.7h0M768.3 774.1h0M773.5 773.9h0M778.6 773.7h0M781.2 773.9h0" stroke="#1c99cf" stroke-width="4.4" stroke-linecap="round" fill="none"/>
<polyline points="604.4,775.7 607.0,775.9 609.5,770.1 612.1,773.7 614.6,775.0 617.2,775.7 619.8,775.9 622.3,775.7 624.9,775.6 627.5,775.6 630.0,775.7 632.6,775.9 635.1,775.7 637.7,775.8 640.3,775.7 642.8,775.6 645.4,775.7 647.9,775.9 650.5,775.8 653.1,775.6 655.6,775.9 658.2,775.7 660.8,775.8 663.3,775.9 665.9,775.7 668.4,775.9 671.0,774.1 673.6,775.2 676.1,775.9 678.7,775.9 681.3,773.0 683.8,769.3 686.4,773.7 688.9,775.0 691.5,775.8 694.1,775.8 696.6,775.7 699.2,775.8 701.7,775.6 704.3,775.8 706.9,775.9 709.4,775.7 712.0,775.9 714.6,775.7 717.1,775.8 719.7,775.6 722.2,775.7 724.8,775.7 727.4,775.8 729.9,775.7 732.5,775.8 735.0,775.7 737.6,775.7 740.2,775.9 742.7,775.8 745.3,775.8 747.9,775.7 750.4,775.8 753.0,775.7 755.5,773.7 758.1,773.0 760.7,772.6 763.2,774.1 765.8,773.7 768.3,774.8 770.9,775.0 773.5,774.9 776.0,775.2 778.6,775.0 781.2,775.2 783.7,775.3 786.3,775.0 788.8,775.3 791.4,775.0 794.0,775.6 796.5,775.7 799.1,775.8 801.6,775.9 804.2,774.3 806.8,775.7 809.3,775.7 811.9,775.9 814.5,775.7 817.0,775.8 819.6,775.8 822.1,775.8 824.7,775.7 827.3,775.8 829.8,775.8 832.4,775.9 835.0,775.7 837.5,775.7 840.1,775.7 842.6,775.8 845.2,775.7 847.8,775.7 850.3,775.7 852.9,775.7 855.4,775.7 858.0,775.8 860.6,775.9 863.1,775.9 865.7,775.8 868.3,775.9 870.8,775.6 873.4,775.8 875.9,775.7 878.5,775.9 881.1,775.8 883.6,775.6 886.2,775.7 888.7,775.8 891.3,775.8 893.9,775.9 896.4,775.9 899.0,775.9 901.6,775.8 904.1,775.8 906.7,775.6 909.2,775.9 911.8,775.8 914.4,775.8 916.9,775.9 919.5,775.8 922.0,775.8 924.6,775.8 927.2,775.9 929.7,774.4 932.3,775.3 934.9,774.3 937.4,775.7 940.0,775.7 942.5,775.8 945.1,775.6 947.7,775.9 950.2,775.7 952.8,775.8 955.3,775.7 957.9,775.7 960.5,775.9 963.0,775.8 965.6,775.9 968.2,775.8 970.7,775.9 973.3,775.8 975.8,775.6 978.4,775.8 981.0,775.8 983.5,775.8 986.1,775.8 988.7,775.7 991.2,775.7 993.8,775.9 996.3,775.8 998.9,775.7 1001.5,775.6 1004.0,775.7 1006.6,775.8 1009.1,775.6 1011.7,775.9 1014.3,775.9 1016.8,775.7 1019.4,775.8 1022.0,775.9 1024.5,775.7 1027.1,774.6 1029.6,775.7 1032.2,775.8" fill="none" stroke="#8dc81e" stroke-width="2.8" stroke-linejoin="round" stroke-linecap="round"/>
<path d="M609.5 770.1h0M612.1 773.7h0M671.0 774.1h0M681.3 773.0h0M683.8 769.3h0M686.4 773.7h0M755.5 773.7h0M758.1 773.0h0M760.7 772.6h0M763.2 774.1h0M765.8 773.7h0M804.2 774.3h0M929.7 774.4h0M934.9 774.3h0M1027.1 774.6h0" stroke="#8dc81e" stroke-width="4.4" stroke-linecap="round" fill="none"/>
<path d="M640.6 777v4.5" stroke="#555" stroke-width="1"/>
<text x="641.1" y="790.2" font-size="10" fill="#92a8c4" text-anchor="end" letter-spacing="0.180" transform="rotate(-25 641.1 790.2)">Jul 31 2019</text>
<path d="M701.5 777v4.5" stroke="#555" stroke-width="1"/>
<text x="702.0" y="790.2" font-size="10" fill="#92a8c4" text-anchor="end" letter-spacing="-0.321" transform="rotate(-25 702.0 790.2)">Aug 01 2019</text>
<path d="M762.7 777v4.5" stroke="#555" stroke-width="1"/>
<text x="763.2" y="790.2" font-size="10" fill="#92a8c4" text-anchor="end" letter-spacing="-0.321" transform="rotate(-25 763.2 790.2)">Aug 02 2019</text>
<path d="M824.6 777v4.5" stroke="#555" stroke-width="1"/>
<text x="825.1" y="790.2" font-size="10" fill="#92a8c4" text-anchor="end" letter-spacing="-0.321" transform="rotate(-25 825.1 790.2)">Aug 03 2019</text>
<path d="M885.4 777v4.5" stroke="#555" stroke-width="1"/>
<text x="885.9" y="790.2" font-size="10" fill="#92a8c4" text-anchor="end" letter-spacing="-0.321" transform="rotate(-25 885.9 790.2)">Aug 04 2019</text>
<path d="M946.3 777v4.5" stroke="#555" stroke-width="1"/>
<text x="946.8" y="790.2" font-size="10" fill="#92a8c4" text-anchor="end" letter-spacing="-0.321" transform="rotate(-25 946.8 790.2)">Aug 05 2019</text>
<path d="M1007.5 777v4.5" stroke="#555" stroke-width="1"/>
<text x="1008.0" y="790.2" font-size="10" fill="#92a8c4" text-anchor="end" letter-spacing="-0.321" transform="rotate(-25 1008.0 790.2)">Aug 06 2019</text>
<text x="572.00" y="665.40" font-size="11" fill="#4c4c4c" font-weight="700" text-anchor="middle" letter-spacing="-0.356" transform="rotate(-90 572.00 665.40)">Severity Count</text>
<circle cx="567.9" cy="830.9" r="5" fill="#8fe1fb"/>
<text x="578.10" y="835.30" font-size="12" fill="#333">I</text>
<circle cx="596" cy="830.9" r="5" fill="#1c99cf"/>
<text x="606.20" y="835.30" font-size="12" fill="#333">W</text>
<circle cx="631.8" cy="830.9" r="5" fill="#8dc81e"/>
<text x="642.00" y="835.30" font-size="12" fill="#333">E</text>
</svg>
<svg width="1597" height="1305">
<circle cx="1332.7" cy="681.3" r="52.20" fill="none" stroke="#8de2fd" stroke-width="44.60"/>
<path d="M1331.8 651.4L1331.1000000000001 606.8L1333.0 606.8L1333.0 651.4z" fill="#1c99cf" fill-opacity="0.55"/>
<path d="M1332.5 651.4V606.8h0.9V651.4z" fill="#8dc81e" fill-opacity="0.75"/>
<path d="M1322.6 584.3H1332.9V606.8" fill="none" stroke="#8dc81e" stroke-width="1"/>
<path d="M1266 601.8L1331.7 607.3" fill="none" stroke="#1c99cf" stroke-width="1"/>
<path d="M1333.0 755.8V778.3H1344" fill="none" stroke="#8de2fd" stroke-width="1"/>
<text x="1322.30" y="588.00" font-size="13" fill="#333" text-anchor="end" letter-spacing="0.033">490 (0.13%) E</text>
<text x="1265.80" y="605.80" font-size="13" fill="#333" text-anchor="end" letter-spacing="0.025">768 (0.21%) W</text>
<text x="1344.50" y="782.00" font-size="13" fill="#333" letter-spacing="0.173">368,045 (99.66%) I</text>
<circle cx="1099.7" cy="827.9" r="5" fill="#8de2fd"/>
<text x="1109.90" y="832.30" font-size="12" fill="#333">I</text>
<circle cx="1127.6" cy="827.9" r="5" fill="#1c99cf"/>
<text x="1137.80" y="832.30" font-size="12" fill="#333">W</text>
<circle cx="1163.9" cy="827.9" r="5" fill="#8dc81e"/>
<text x="1174.10" y="832.30" font-size="12" fill="#333">E</text>
</svg>
<div class="abs" style="left:26px;top:923px;width:1549px;height:400px;background:#fff;border:1px solid #dfe5ec;box-sizing:border-box"></div>
<div class="abs" style="left:27px;top:924px;width:1547px;height:39px;background:#f3f6f8;border-bottom:1px solid #dfe5ec"></div>
<span class="t" style="left:43.20px;top:938.04px;font-size:12px;color:#4e6580;font-weight:700;letter-spacing:-0.248px;">MessageTime</span>
<span class="t" style="left:430.00px;top:938.04px;font-size:12px;color:#4e6580;font-weight:700;letter-spacing:-0.338px;">severity</span>
<span class="t" style="left:817.20px;top:938.04px;font-size:12px;color:#4e6580;font-weight:700;letter-spacing:-0.640px;">log_msg</span>
<span class="t" style="left:1204.00px;top:938.04px;font-size:12px;color:#4e6580;font-weight:700;letter-spacing:-0.666px;">_count</span>
<div class="abs" style="left:413px;top:929px;width:1px;height:27px;background:#566b82"></div>
<div class="abs" style="left:800px;top:929px;width:1px;height:27px;background:#566b82"></div>
<div class="abs" style="left:1187px;top:929px;width:1px;height:27px;background:#566b82"></div>
<div class="abs" style="left:1574px;top:929px;width:1px;height:27px;background:#566b82"></div>
<span class="t" style="left:39.50px;top:972.44px;font-size:12px;color:#2f3b4a;letter-spacing:0.518px;">08-01-2019 22:51</span>
<span class="t" style="left:426.30px;top:972.44px;font-size:12px;color:#2f3b4a;">E</span>
<span class="t" style="left:813.00px;top:972.44px;font-size:12px;color:#2f3b4a;letter-spacing:0.323px;">watch chan error: etcdserver: mvcc: required revision has bee...</span>
<span class="t" style="left:1200.00px;top:972.44px;font-size:12px;color:#2f3b4a;">1</span>
<div class="abs" style="left:27px;top:1003.4px;width:1547px;height:1px;background:#e3e8ee"></div>
<span class="t" style="left:39.50px;top:1012.37px;font-size:12px;color:#2f3b4a;letter-spacing:0.518px;">07-31-2019 00:40</span>
<span class="t" style="left:426.30px;top:1012.37px;font-size:12px;color:#2f3b4a;">E</span>
<span class="t" style="left:813.00px;top:1012.37px;font-size:12px;color:#2f3b4a;letter-spacing:0.288px;">apiserver received an error that is not an metav1.Status: stora...</span>
<span class="t" style="left:1200.00px;top:1012.37px;font-size:12px;color:#2f3b4a;">1</span>
<div class="abs" style="left:27px;top:1043.4px;width:1547px;height:1px;background:#e3e8ee"></div>
<span class="t" style="left:39.50px;top:1052.30px;font-size:12px;color:#2f3b4a;letter-spacing:0.518px;">07-31-2019 18:53</span>
<span class="t" style="left:426.30px;top:1052.30px;font-size:12px;color:#2f3b4a;">E</span>
<span class="t" style="left:813.00px;top:1052.30px;font-size:12px;color:#2f3b4a;letter-spacing:0.288px;">apiserver received an error that is not an metav1.Status: stora...</span>
<span class="t" style="left:1200.00px;top:1052.30px;font-size:12px;color:#2f3b4a;">1</span>
<div class="abs" style="left:27px;top:1083.3px;width:1547px;height:1px;background:#e3e8ee"></div>
<span class="t" style="left:39.50px;top:1092.23px;font-size:12px;color:#2f3b4a;letter-spacing:0.577px;">08-02-2019 01:11</span>
<span class="t" style="left:426.30px;top:1092.23px;font-size:12px;color:#2f3b4a;">E</span>
<span class="t" style="left:813.00px;top:1092.23px;font-size:12px;color:#2f3b4a;letter-spacing:0.323px;">watch chan error: etcdserver: mvcc: required revision has bee...</span>
<span class="t" style="left:1200.00px;top:1092.23px;font-size:12px;color:#2f3b4a;">1</span>
<div class="abs" style="left:27px;top:1123.2px;width:1547px;height:1px;background:#e3e8ee"></div>
<span class="t" style="left:39.50px;top:1132.16px;font-size:12px;color:#2f3b4a;letter-spacing:0.518px;">08-02-2019 00:51</span>
<span class="t" style="left:426.30px;top:1132.16px;font-size:12px;color:#2f3b4a;">E</span>
<span class="t" style="left:813.00px;top:1132.16px;font-size:12px;color:#2f3b4a;letter-spacing:0.323px;">watch chan error: etcdserver: mvcc: required revision has bee...</span>
<span class="t" style="left:1200.00px;top:1132.16px;font-size:12px;color:#2f3b4a;">1</span>
<div class="abs" style="left:27px;top:1163.2px;width:1547px;height:1px;background:#e3e8ee"></div>
<span class="t" style="left:39.50px;top:1172.09px;font-size:12px;color:#2f3b4a;letter-spacing:0.518px;">08-02-2019 14:01</span>
<span class="t" style="left:426.30px;top:1172.09px;font-size:12px;color:#2f3b4a;">E</span>
<span class="t" style="left:813.00px;top:1172.09px;font-size:12px;color:#2f3b4a;letter-spacing:0.323px;">watch chan error: etcdserver: mvcc: required revision has bee...</span>
<span class="t" style="left:1200.00px;top:1172.09px;font-size:12px;color:#2f3b4a;">1</span>
<div class="abs" style="left:27px;top:1203.1px;width:1547px;height:1px;background:#e3e8ee"></div>
<span class="t" style="left:39.50px;top:1212.02px;font-size:12px;color:#2f3b4a;letter-spacing:0.518px;">08-01-2019 09:53</span>
<span class="t" style="left:426.30px;top:1212.02px;font-size:12px;color:#2f3b4a;">E</span>
<span class="t" style="left:813.00px;top:1212.02px;font-size:12px;color:#2f3b4a;letter-spacing:0.288px;">apiserver received an error that is not an metav1.Status: stora...</span>
<span class="t" style="left:1200.00px;top:1212.02px;font-size:12px;color:#2f3b4a;">1</span>
<div class="abs" style="left:27px;top:1243.0px;width:1547px;height:1px;background:#e3e8ee"></div>
<span class="t" style="left:39.50px;top:1251.95px;font-size:12px;color:#2f3b4a;letter-spacing:0.518px;">08-02-2019 01:34</span>
<span class="t" style="left:426.30px;top:1251.95px;font-size:12px;color:#2f3b4a;">E</span>
<span class="t" style="left:813.00px;top:1251.95px;font-size:12px;color:#2f3b4a;letter-spacing:0.323px;">watch chan error: etcdserver: mvcc: required revision has bee...</span>
<span class="t" style="left:1200.00px;top:1251.95px;font-size:12px;color:#2f3b4a;">1</span>
<div class="abs" style="left:27px;top:1272px;width:1547px;height:40px;background:#f3f6f8;border-top:1px solid #dfe5ec"></div>
<div class="abs" style="left:55px;top:1281px;width:24px;height:24px;background:#a9b9cb;border-radius:2px 2px 0 0"></div>
<span class="t" style="left:-433.00px;width:1000px;text-align:center;top:1285.97px;font-size:13.5px;color:#e8eef4;">1</span>
<span class="t" style="left:-405.30px;width:1000px;text-align:center;top:1285.97px;font-size:13.5px;color:#5a708a;">2</span>
<span class="t" style="left:-377.30px;width:1000px;text-align:center;top:1285.97px;font-size:13.5px;color:#5a708a;">3</span>
<span class="t" style="left:-349.20px;width:1000px;text-align:center;top:1285.97px;font-size:13.5px;color:#5a708a;">4</span>
<svg width="1597" height="1305"><path d="M42 1286.5l-5 5.5l5 5.5" fill="none" stroke="#b9c6d5" stroke-width="1.4"/><path d="M176.5 1286.5l5 5.5l-5 5.5" fill="none" stroke="#7f95ae" stroke-width="1.4"/></svg>
<div class="abs" style="left:1589px;top:456px;width:6px;height:850px;background:#fafbfb"></div>
<div class="abs" style="left:300px;top:1318px;width:980px;height:10px;box-shadow:0 0 26px 16px rgba(0,0,0,0.085)"></div>
<div class="abs" style="left:0;top:0;width:1597px;height:1305px;box-sizing:border-box;border:2px solid #000;box-shadow:inset 0 0 0 1px #fff"></div>
</div>
</body></html>
